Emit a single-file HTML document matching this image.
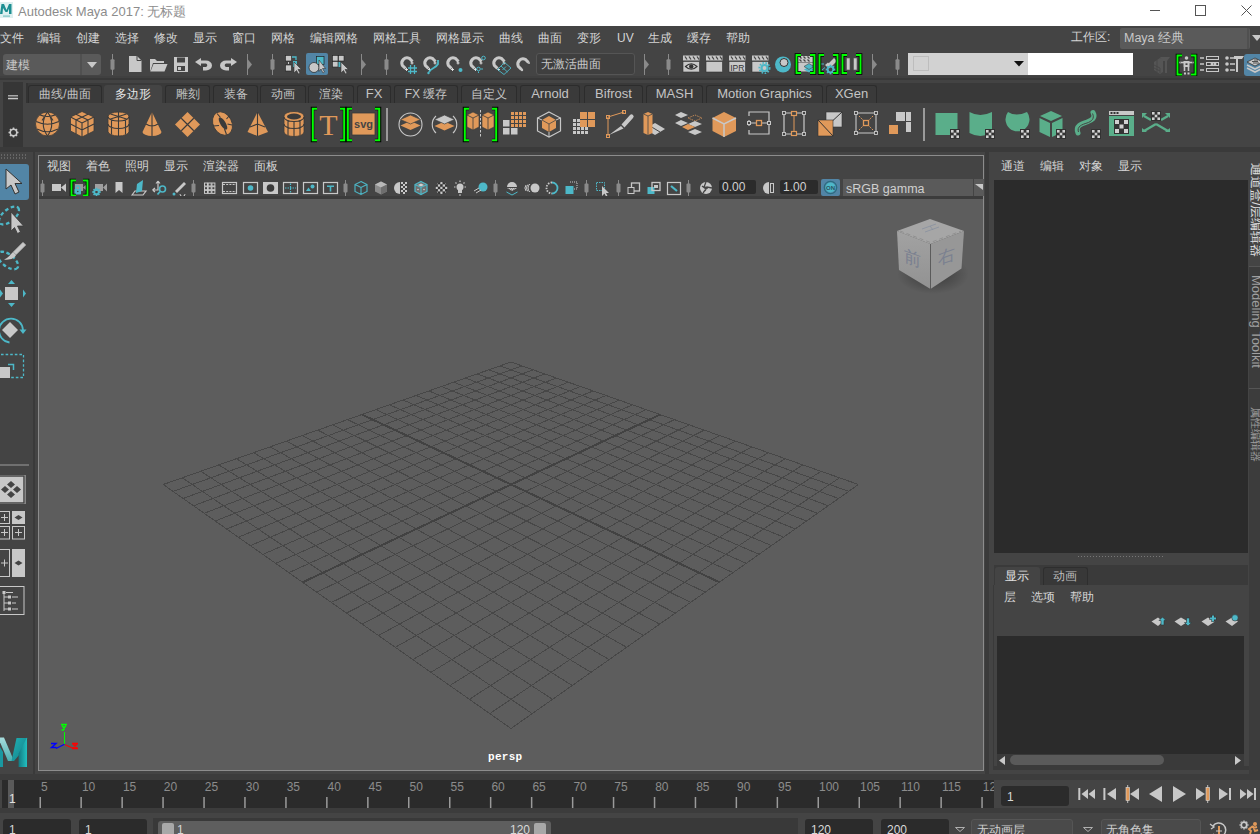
<!DOCTYPE html>
<html><head><meta charset="utf-8">
<style>
*{margin:0;padding:0;box-sizing:border-box}
html,body{width:1260px;height:834px;overflow:hidden;background:#444;font-family:"Liberation Sans",sans-serif;font-size:12px;color:#c4c4c4}
.a{position:absolute}
.t{position:absolute;white-space:nowrap;line-height:14px}
svg{position:absolute;overflow:visible}
</style></head><body>
<div class="a" style="left:0px;top:0px;width:1260px;height:26px;background:#fff;"></div>
<div class="t" style="left:18px;top:5px;color:#8c8c8c;font-size:13px;">Autodesk Maya 2017: 无标题</div>
<svg style="left:0px;top:2px;" width="13" height="16" viewBox="0 0 13 16"><rect x="0" y="0" width="13" height="16" fill="#dff0f0"/><path d="M0 12L1.5 2H4L6.5 8L9 2H11.5V12H9V6.5L7.5 10H5.5L3 6L2.5 12Z" fill="#1d8f92"/><rect x="3" y="13.5" width="7" height="1.2" fill="#7cc4c4"/></svg>
<svg style="left:1150px;top:10px;" width="10" height="1" viewBox="0 0 10 1"><rect x="0" y="0" width="10" height="1" fill="#555"/></svg>
<svg style="left:1195px;top:5px;" width="11" height="11" viewBox="0 0 11 11"><rect x="0.5" y="0.5" width="10" height="10" fill="none" stroke="#555" stroke-width="1"/></svg>
<svg style="left:1241px;top:5px;" width="11" height="11" viewBox="0 0 11 11"><path d="M0.5 0.5L10.5 10.5M10.5 0.5L0.5 10.5" stroke="#555" stroke-width="1"/></svg>
<div class="t" style="left:0px;top:31px;color:#d4d4d4;font-size:12px;">文件</div>
<div class="t" style="left:37px;top:31px;color:#d4d4d4;font-size:12px;">编辑</div>
<div class="t" style="left:76px;top:31px;color:#d4d4d4;font-size:12px;">创建</div>
<div class="t" style="left:115px;top:31px;color:#d4d4d4;font-size:12px;">选择</div>
<div class="t" style="left:154px;top:31px;color:#d4d4d4;font-size:12px;">修改</div>
<div class="t" style="left:193px;top:31px;color:#d4d4d4;font-size:12px;">显示</div>
<div class="t" style="left:232px;top:31px;color:#d4d4d4;font-size:12px;">窗口</div>
<div class="t" style="left:271px;top:31px;color:#d4d4d4;font-size:12px;">网格</div>
<div class="t" style="left:310px;top:31px;color:#d4d4d4;font-size:12px;">编辑网格</div>
<div class="t" style="left:373px;top:31px;color:#d4d4d4;font-size:12px;">网格工具</div>
<div class="t" style="left:436px;top:31px;color:#d4d4d4;font-size:12px;">网格显示</div>
<div class="t" style="left:499px;top:31px;color:#d4d4d4;font-size:12px;">曲线</div>
<div class="t" style="left:538px;top:31px;color:#d4d4d4;font-size:12px;">曲面</div>
<div class="t" style="left:577px;top:31px;color:#d4d4d4;font-size:12px;">变形</div>
<div class="t" style="left:617px;top:31px;color:#d4d4d4;font-size:12px;">UV</div>
<div class="t" style="left:648px;top:31px;color:#d4d4d4;font-size:12px;">生成</div>
<div class="t" style="left:687px;top:31px;color:#d4d4d4;font-size:12px;">缓存</div>
<div class="t" style="left:726px;top:31px;color:#d4d4d4;font-size:12px;">帮助</div>
<div class="t" style="left:1071px;top:30px;color:#d4d4d4;font-size:12px;">工作区:</div>
<div class="a" style="left:1120px;top:28px;width:130px;height:21px;background:#5a5a5a;border-radius:2px"></div>
<div class="t" style="left:1124px;top:31px;color:#c8c8c8;font-size:12.5px;">Maya 经典</div>
<div class="a" style="left:1247px;top:28px;width:2px;height:21px;background:#505050;"></div>
<svg style="left:1252px;top:35px;" width="8" height="6" viewBox="0 0 8 6"><path d="M0 0H10L5 6Z" fill="#c8c8c8"/></svg>
<div class="a" style="left:3px;top:54px;width:98px;height:21px;background:#5a5a5a;border-radius:3px"></div>
<div class="a" style="left:80px;top:54px;width:2px;height:21px;background:#505050;"></div>
<svg style="left:87px;top:62px;" width="10" height="6" viewBox="0 0 10 6"><path d="M0 0H10L5 6Z" fill="#c8c8c8"/></svg>
<div class="t" style="left:6px;top:58px;color:#c8c8c8;font-size:12px;">建模</div>
<svg style="left:110px;top:54px;" width="5" height="21" viewBox="0 0 5 21"><rect x="2" y="0" width="1" height="21" fill="#8a8a8a"/><rect x="0.5" y="5.2" width="4" height="10.5" rx="1" fill="#8a8a8a"/></svg>
<svg style="left:129px;top:56px;" width="13" height="16" viewBox="0 0 13 16"><path d="M0 0H8L12.5 4.5V16H0Z" fill="#c8c8c8"/><path d="M8 0V4.5H12.5" fill="none" stroke="#444" stroke-width="1"/></svg>
<svg style="left:149px;top:57px;" width="19" height="15" viewBox="0 0 19 15"><path d="M1 2H6L8 4H15V6H4L1 15Z" fill="#c8c8c8"/><path d="M4.5 7H18.5L15.5 14.5H1.5Z" fill="#c8c8c8"/></svg>
<svg style="left:174px;top:57px;" width="14" height="15" viewBox="0 0 14 15"><path d="M0 0H14V15H0Z" fill="#c8c8c8"/><rect x="3" y="0.5" width="8" height="5" fill="#444"/><rect x="3" y="9" width="8" height="5" fill="#444"/><rect x="4" y="10" width="3" height="3" fill="#c8c8c8"/></svg>
<svg style="left:195px;top:58px;" width="18" height="12" viewBox="0 0 18 12"><path d="M0 4L6 0V2.5H11A6 5 0 0 1 11 12.5H8V9H11A2.5 2 0 0 0 11 5.5H6V8Z" fill="#c8c8c8"/></svg>
<svg style="left:219px;top:58px;" width="18" height="12" viewBox="0 0 18 12"><g transform="translate(18,0) scale(-1,1)"><path d="M0 4L6 0V2.5H11A6 5 0 0 1 11 12.5H8V9H11A2.5 2 0 0 0 11 5.5H6V8Z" fill="#c8c8c8"/></g></svg>
<svg style="left:247px;top:54px;" width="6" height="21" viewBox="0 0 6 21"><rect x="0" y="0" width="1" height="21" fill="#8a8a8a"/><path d="M1 5.5 L5 10.5 L1 15.5Z" fill="#8a8a8a"/></svg>
<svg style="left:270px;top:54px;" width="5" height="21" viewBox="0 0 5 21"><rect x="2" y="0" width="1" height="21" fill="#8a8a8a"/><rect x="0.5" y="5.2" width="4" height="10.5" rx="1" fill="#8a8a8a"/></svg>
<svg style="left:285px;top:55px;" width="18" height="19" viewBox="0 0 18 19"><rect x="0.5" y="0.5" width="6" height="5.5" fill="#c8c8c8" stroke="#222" stroke-width="0.6"/><rect x="0.5" y="10" width="6" height="6" fill="#c8c8c8" stroke="#222" stroke-width="0.6"/><rect x="3" y="7" width="1" height="2" fill="#c8c8c8"/><path d="M7 2H11V5" stroke="#4db8c8" stroke-width="1.3" fill="none"/><rect x="8" y="6" width="4" height="6" fill="#4db8c8"/><path d="M9 7V18L11.5 15.5L13.5 19L15 18L13 14.5H16.5Z" fill="#c8c8c8" stroke="#333" stroke-width="0.6"/></svg>
<div class="a" style="left:306px;top:53px;width:22px;height:22px;background:#5285a6;border-radius:2px"></div>
<svg style="left:308px;top:55px;" width="18" height="19" viewBox="0 0 18 19"><rect x="8.5" y="1.5" width="7.5" height="8" fill="#4db8c8" stroke="#222" stroke-width="0.7"/><circle cx="6" cy="12.5" r="5" fill="#c8c8c8" stroke="#222" stroke-width="0.7"/><path d="M11 5V16.5L13 14L15 18L16.5 17L14.5 13.5H17.5Z" fill="#c8c8c8" stroke="#333" stroke-width="0.6"/></svg>
<svg style="left:332px;top:55px;" width="18" height="19" viewBox="0 0 18 19"><rect x="0.5" y="0.5" width="5.5" height="5.5" fill="#c8c8c8" stroke="#222" stroke-width="0.6"/><rect x="6.5" y="0.5" width="5.5" height="5.5" fill="#c8c8c8" stroke="#222" stroke-width="0.6"/><rect x="0.5" y="6.5" width="5.5" height="5.5" fill="#c8c8c8" stroke="#222" stroke-width="0.6"/><rect x="6.5" y="7" width="2" height="5" fill="#4db8c8"/><path d="M9 7V18L11.5 15.5L13.5 19L15 18L13 14.5H16.5Z" fill="#c8c8c8" stroke="#333" stroke-width="0.6"/></svg>
<svg style="left:361px;top:54px;" width="6" height="21" viewBox="0 0 6 21"><rect x="0" y="0" width="1" height="21" fill="#8a8a8a"/><path d="M1 5.5 L5 10.5 L1 15.5Z" fill="#8a8a8a"/></svg>
<svg style="left:384px;top:54px;" width="5" height="21" viewBox="0 0 5 21"><rect x="2" y="0" width="1" height="21" fill="#8a8a8a"/><rect x="0.5" y="5.2" width="4" height="10.5" rx="1" fill="#8a8a8a"/></svg>
<svg style="left:400px;top:56px;" width="19" height="18" viewBox="0 0 19 18"><path d="M5.5 12.5L2.3 9.3A5.3 5.3 0 0 1 9.3 2.3L12.5 5.5" stroke="#c8c8c8" stroke-width="3" fill="none"/><path d="M6.5 12v3M5 13.5h3M12 5.5v3M10.5 7h3" stroke="#e8e8e8" stroke-width="0.9"/><path d="M10.5 9V18M14.5 9V18M8 12H17M8 15.5H17" stroke="#4db8c8" stroke-width="1.3"/></svg>
<svg style="left:423px;top:56px;" width="19" height="18" viewBox="0 0 19 18"><path d="M5.5 12.5L2.3 9.3A5.3 5.3 0 0 1 9.3 2.3L12.5 5.5" stroke="#c8c8c8" stroke-width="3" fill="none"/><path d="M6.5 12v3M5 13.5h3M12 5.5v3M10.5 7h3" stroke="#e8e8e8" stroke-width="0.9"/><path d="M6 16C8 12 13 12 15 8V4" stroke="#4db8c8" stroke-width="1.8" fill="none"/><circle cx="5.5" cy="17" r="1.2" fill="#4db8c8"/></svg>
<svg style="left:446px;top:56px;" width="19" height="18" viewBox="0 0 19 18"><path d="M5.5 12.5L2.3 9.3A5.3 5.3 0 0 1 9.3 2.3L12.5 5.5" stroke="#c8c8c8" stroke-width="3" fill="none"/><path d="M6.5 12v3M5 13.5h3M12 5.5v3M10.5 7h3" stroke="#e8e8e8" stroke-width="0.9"/><circle cx="14.5" cy="14" r="2" fill="#4db8c8"/></svg>
<svg style="left:469px;top:56px;" width="19" height="18" viewBox="0 0 19 18"><path d="M5.5 12.5L2.3 9.3A5.3 5.3 0 0 1 9.3 2.3L12.5 5.5" stroke="#c8c8c8" stroke-width="3" fill="none"/><path d="M6.5 12v3M5 13.5h3M12 5.5v3M10.5 7h3" stroke="#e8e8e8" stroke-width="0.9"/><circle cx="9.5" cy="13" r="1.8" stroke="#4db8c8" stroke-width="1" fill="none"/><circle cx="14.5" cy="2" r="1.8" stroke="#4db8c8" stroke-width="1" fill="none"/><path d="M12 13H14M9.5 15.5V17" stroke="#4db8c8" stroke-width="1"/></svg>
<svg style="left:492px;top:56px;" width="19" height="18" viewBox="0 0 19 18"><path d="M5.5 12.5L2.3 9.3A5.3 5.3 0 0 1 9.3 2.3L12.5 5.5" stroke="#c8c8c8" stroke-width="3" fill="none"/><path d="M6.5 12v3M5 13.5h3M12 5.5v3M10.5 7h3" stroke="#e8e8e8" stroke-width="0.9"/><path d="M5.5 13.5L12.5 6.5L19 12L12 18.5Z M9 10L15.5 16M10.5 14L14 10.5" stroke="#4db8c8" stroke-width="0.9" fill="none"/></svg>
<svg style="left:516px;top:56px;" width="16" height="18" viewBox="0 0 16 18"><path d="M5.5 13.5L2.3 10.3A5.3 5.3 0 0 1 9.3 3.3L12.5 6.5" stroke="#c8c8c8" stroke-width="3" fill="none"/><circle cx="13" cy="7" r="1" fill="#c8c8c8"/><circle cx="6" cy="14" r="1.2" fill="#c8c8c8"/></svg>
<div class="a" style="left:536px;top:53px;width:99px;height:22px;background:#3f3f3f;border:1px solid #555;border-radius:3px"></div>
<div class="t" style="left:541px;top:57px;color:#c8c8c8;font-size:12px;">无激活曲面</div>
<svg style="left:644px;top:54px;" width="6" height="21" viewBox="0 0 6 21"><rect x="0" y="0" width="1" height="21" fill="#8a8a8a"/><path d="M1 5.5 L5 10.5 L1 15.5Z" fill="#8a8a8a"/></svg>
<svg style="left:666px;top:54px;" width="5" height="21" viewBox="0 0 5 21"><rect x="2" y="0" width="1" height="21" fill="#8a8a8a"/><rect x="0.5" y="5.2" width="4" height="10.5" rx="1" fill="#8a8a8a"/></svg>
<svg style="left:683px;top:55px;" width="18" height="18" viewBox="0 0 18 18"><rect x="0" y="0.5" width="16.5" height="5" fill="#c8c8c8"/><path d="M2 1.5l2 3M6 1.5l2 3M10 1.5l2 3M14 1.5l2 3" stroke="#444" stroke-width="1.3"/><rect x="0" y="6.5" width="16.5" height="10.5" fill="#c8c8c8" stroke="#333" stroke-width="0.6"/><path d="M2.5 11.5Q8.25 6 14 11.5Q8.25 17 2.5 11.5Z" fill="none" stroke="#333" stroke-width="1.1"/><circle cx="8.25" cy="11.5" r="2.2" fill="#333"/></svg>
<svg style="left:706px;top:55px;" width="18" height="18" viewBox="0 0 18 18"><rect x="0" y="0.5" width="16.5" height="5" fill="#c8c8c8"/><path d="M2 1.5l2 3M6 1.5l2 3M10 1.5l2 3M14 1.5l2 3" stroke="#444" stroke-width="1.3"/><rect x="0" y="6.5" width="16.5" height="10.5" fill="#c8c8c8" stroke="#333" stroke-width="0.6"/></svg>
<svg style="left:729px;top:55px;" width="18" height="18" viewBox="0 0 18 18"><rect x="0" y="0.5" width="16.5" height="5" fill="#c8c8c8"/><path d="M2 1.5l2 3M6 1.5l2 3M10 1.5l2 3M14 1.5l2 3" stroke="#444" stroke-width="1.3"/><rect x="0" y="6.5" width="16.5" height="10.5" fill="#c8c8c8" stroke="#333" stroke-width="0.6"/><text x="8.25" y="15.5" text-anchor="middle" font-family="Liberation Sans" font-size="8.5" fill="#333">IPR</text></svg>
<svg style="left:752px;top:55px;" width="18" height="18" viewBox="0 0 18 18"><rect x="0" y="0.5" width="16.5" height="5" fill="#c8c8c8"/><path d="M2 1.5l2 3M6 1.5l2 3M10 1.5l2 3M14 1.5l2 3" stroke="#444" stroke-width="1.3"/><rect x="0" y="6.5" width="16.5" height="10.5" fill="#c8c8c8" stroke="#333" stroke-width="0.6"/><circle cx="12.5" cy="13" r="3" fill="#c8c8c8" stroke="#4db8c8" stroke-width="2.2"/><circle cx="12.5" cy="13" r="5.2" fill="none" stroke="#4db8c8" stroke-width="1.6" stroke-dasharray="1.7 1.4"/></svg>
<svg style="left:774px;top:55px;" width="18" height="18" viewBox="0 0 18 18"><circle cx="9" cy="9.5" r="8" fill="#4db8c8"/><circle cx="10" cy="7.5" r="4" fill="#c8c8c8" stroke="#333" stroke-width="1"/></svg>
<svg style="left:795px;top:53px;" width="21" height="22" viewBox="0 0 21 22"><rect x="3" y="3" width="15" height="6" fill="#c8c8c8"/><path d="M4.5 3.5l2 2M8.5 3.5l2 2M12.5 3.5l2 2M4.5 6.5l2 2M8.5 6.5l2 2M12.5 6.5l2 2" stroke="#444" stroke-width="1.2"/><rect x="3" y="9.5" width="15" height="9" fill="#c8c8c8"/><path d="M9 16.5L14 13.5L19 16.5L14 19.5Z" fill="#4db8c8"/><path d="M9 13.5L14 10.5L19 13.5L14 16.5Z" fill="#4db8c8" stroke="#444" stroke-width="0.6"/><path d="M6 2.0H1.5V20.0H6M15 2.0H19.5V20.0H15" stroke="#000" stroke-width="3.6" fill="none"/><path d="M6 2.0H1.5V20.0H6M15 2.0H19.5V20.0H15" stroke="#00ff00" stroke-width="1.9" fill="none"/></svg>
<svg style="left:818px;top:53px;" width="21" height="22" viewBox="0 0 21 22"><path d="M10 11L16 5L19 8L13 14Z" fill="#c8c8c8"/><path d="M7 12L10 9.5L13.5 13L11 15.5Z" fill="#c8c8c8"/><path d="M3 11H6M4 17L7 14.5" stroke="#4db8c8" stroke-width="1"/><circle cx="12.5" cy="16.5" r="2.8" fill="none" stroke="#4db8c8" stroke-width="1.8"/><rect x="11.6" y="11.7" width="1.8" height="2" fill="#4db8c8" transform="rotate(0 12.5 16.5)"/><rect x="11.6" y="11.7" width="1.8" height="2" fill="#4db8c8" transform="rotate(45 12.5 16.5)"/><rect x="11.6" y="11.7" width="1.8" height="2" fill="#4db8c8" transform="rotate(90 12.5 16.5)"/><rect x="11.6" y="11.7" width="1.8" height="2" fill="#4db8c8" transform="rotate(135 12.5 16.5)"/><rect x="11.6" y="11.7" width="1.8" height="2" fill="#4db8c8" transform="rotate(180 12.5 16.5)"/><rect x="11.6" y="11.7" width="1.8" height="2" fill="#4db8c8" transform="rotate(225 12.5 16.5)"/><rect x="11.6" y="11.7" width="1.8" height="2" fill="#4db8c8" transform="rotate(270 12.5 16.5)"/><rect x="11.6" y="11.7" width="1.8" height="2" fill="#4db8c8" transform="rotate(315 12.5 16.5)"/><path d="M6 2.0H1.5V20.0H6M15 2.0H19.5V20.0H15" stroke="#000" stroke-width="3.6" fill="none"/><path d="M6 2.0H1.5V20.0H6M15 2.0H19.5V20.0H15" stroke="#00ff00" stroke-width="1.9" fill="none"/></svg>
<svg style="left:841px;top:53px;" width="21" height="22" viewBox="0 0 21 22"><rect x="5.5" y="5" width="3.5" height="12" fill="#c8c8c8" stroke="#555" stroke-width="0.6"/><rect x="12.5" y="5" width="3.5" height="12" fill="#c8c8c8" stroke="#555" stroke-width="0.6"/><path d="M6 2.0H1.5V20.0H6M15 2.0H19.5V20.0H15" stroke="#000" stroke-width="3.6" fill="none"/><path d="M6 2.0H1.5V20.0H6M15 2.0H19.5V20.0H15" stroke="#00ff00" stroke-width="1.9" fill="none"/></svg>
<svg style="left:872px;top:54px;" width="6" height="21" viewBox="0 0 6 21"><rect x="0" y="0" width="1" height="21" fill="#8a8a8a"/><path d="M1 5.5 L5 10.5 L1 15.5Z" fill="#8a8a8a"/></svg>
<svg style="left:895px;top:54px;" width="5" height="21" viewBox="0 0 5 21"><rect x="2" y="0" width="1" height="21" fill="#8a8a8a"/><rect x="0.5" y="5.2" width="4" height="10.5" rx="1" fill="#8a8a8a"/></svg>
<div class="a" style="left:908px;top:53px;width:120px;height:22px;background:#d2d2d2;"></div>
<div class="a" style="left:913px;top:56px;width:16px;height:15px;background:transparent;border:1px solid #bdbdbd"></div>
<svg style="left:1014px;top:61px;" width="10" height="6" viewBox="0 0 10 6"><path d="M0 0H10L5 5.5Z" fill="#111"/></svg>
<div class="a" style="left:1028px;top:53px;width:105px;height:22px;background:#ffffff;"></div>
<svg style="left:1153px;top:56px;" width="18" height="18" viewBox="0 0 18 18"><path d="M1 6L7 2L10 3V16L7 18L1 14Z" fill="#555"/><path d="M7 1H17L14 5H10Z" fill="#555"/><rect x="12" y="4" width="2" height="13" fill="#555"/><path d="M1 9L7 12V17M1 12L7 15M4 4V16" stroke="#444" stroke-width="0.8" fill="none"/></svg>
<svg style="left:1176px;top:54px;" width="21" height="22" viewBox="0 0 21 22"><circle cx="10.5" cy="4" r="1.8" fill="#c8c8c8"/><rect x="7.5" y="7" width="6" height="6" fill="#c8c8c8"/><rect x="9.5" y="9" width="2" height="2" fill="#444"/><path d="M3 8.5H18" stroke="#c8c8c8" stroke-width="1.6"/><rect x="2.5" y="7.5" width="2" height="2" fill="#c8c8c8" stroke="#444" stroke-width="0.5"/><rect x="16.5" y="7.5" width="2" height="2" fill="#c8c8c8" stroke="#444" stroke-width="0.5"/><path d="M8.5 13V17M12.5 13V17" stroke="#c8c8c8" stroke-width="1.6"/><rect x="8" y="18.5" width="2" height="2" fill="#c8c8c8"/><rect x="11.5" y="18.5" width="2" height="2" fill="#c8c8c8"/><path d="M6 1.5H1.5V20.5H6M15 1.5H19.5V20.5H15" stroke="#000" stroke-width="3.6" fill="none"/><path d="M6 1.5H1.5V20.5H6M15 1.5H19.5V20.5H15" stroke="#00ff00" stroke-width="1.9" fill="none"/></svg>
<svg style="left:1200px;top:56px;" width="20" height="17" viewBox="0 0 20 17"><path d="M0 2H4M0 8H4M0 14H4" stroke="#c8c8c8" stroke-width="1.5"/><rect x="6.5" y="0.5" width="12" height="3" fill="none" stroke="#c8c8c8" stroke-width="1"/><rect x="6.5" y="12.5" width="12" height="3" fill="none" stroke="#c8c8c8" stroke-width="1"/><rect x="6.5" y="6.5" width="12" height="3" fill="none" stroke="#c8c8c8" stroke-width="1"/><circle cx="12" cy="8" r="1.5" fill="#c8c8c8"/><circle cx="15" cy="8" r="1.5" fill="#c8c8c8"/></svg>
<svg style="left:1225px;top:56px;" width="20" height="17" viewBox="0 0 20 17"><circle cx="2" cy="2" r="1.8" fill="#c8c8c8"/><circle cx="2" cy="8" r="1.8" fill="#c8c8c8"/><circle cx="2" cy="14" r="1.8" fill="#c8c8c8"/><path d="M5 2H10M5 8H10M5 14H10" stroke="#c8c8c8" stroke-width="1.4"/><path d="M9 0H19L17 3H13V16H11V3H9Z" fill="#c8c8c8"/></svg>
<div class="a" style="left:1244px;top:54px;width:16px;height:22px;background:#5285a6;border-radius:3px 0 0 3px"></div>
<svg style="left:1247px;top:57px;" width="13" height="17" viewBox="0 0 13 17"><path d="M0 11L8 15L16 11M0 8L8 12L16 8" stroke="#c8c8c8" stroke-width="1.6" fill="none"/><path d="M0 5L8 1L16 5L8 9Z" fill="#c8c8c8" stroke="#333" stroke-width="0.8"/><path d="M5 4.5H11M6 6H12M7 3H11" stroke="#333" stroke-width="0.8"/></svg>
<div class="a" style="left:0px;top:76px;width:1260px;height:2px;background:#404040;"></div>
<div class="a" style="left:0px;top:78px;width:1260px;height:2px;background:#383838;"></div>
<div class="a" style="left:0px;top:80px;width:1260px;height:3px;background:#434343;"></div>
<div class="a" style="left:26px;top:83px;width:1234px;height:20px;background:#393939;"></div>
<div class="a" style="left:26px;top:83px;width:2px;height:20px;background:#333;"></div>
<div class="a" style="left:3px;top:82px;width:20px;height:65px;background:#363636;"></div>
<svg style="left:8px;top:95px;" width="10" height="5" viewBox="0 0 10 5"><rect x="0" y="0" width="10" height="1.5" fill="#a8a8a8"/><rect x="0" y="2.8" width="10" height="1.5" fill="#c8c8c8"/></svg>
<svg style="left:7px;top:126px;" width="13" height="13" viewBox="0 0 13 13"><circle cx="6.5" cy="6.5" r="3.3" fill="none" stroke="#c8c8c8" stroke-width="1.6"/><path d="M6.5 1.5V3M6.5 10V11.5M1.5 6.5H3M10 6.5H11.5M3 3L4 4M9 9L10 10M3 10L4 9M9 4L10 3" stroke="#c8c8c8" stroke-width="1.6"/></svg>
<div class="a" style="left:28px;top:85px;width:74px;height:18px;background:#3a3a3a;border-radius:3px 3px 0 0;border:1px solid #2c2c2c;border-bottom:none"></div>
<div class="t" style="left:28px;top:87px;width:74px;text-align:center;color:#c4c4c4;font-size:12px">曲线/曲面</div>
<div class="a" style="left:104px;top:85px;width:58px;height:18px;background:#444;border-radius:3px 3px 0 0;"></div>
<div class="t" style="left:104px;top:87px;width:58px;text-align:center;color:#e8e8e8;font-size:12px">多边形</div>
<div class="a" style="left:165px;top:85px;width:45px;height:18px;background:#3a3a3a;border-radius:3px 3px 0 0;border:1px solid #2c2c2c;border-bottom:none"></div>
<div class="t" style="left:165px;top:87px;width:45px;text-align:center;color:#c4c4c4;font-size:12px">雕刻</div>
<div class="a" style="left:213px;top:85px;width:45px;height:18px;background:#3a3a3a;border-radius:3px 3px 0 0;border:1px solid #2c2c2c;border-bottom:none"></div>
<div class="t" style="left:213px;top:87px;width:45px;text-align:center;color:#c4c4c4;font-size:12px">装备</div>
<div class="a" style="left:260px;top:85px;width:46px;height:18px;background:#3a3a3a;border-radius:3px 3px 0 0;border:1px solid #2c2c2c;border-bottom:none"></div>
<div class="t" style="left:260px;top:87px;width:46px;text-align:center;color:#c4c4c4;font-size:12px">动画</div>
<div class="a" style="left:308px;top:85px;width:46px;height:18px;background:#3a3a3a;border-radius:3px 3px 0 0;border:1px solid #2c2c2c;border-bottom:none"></div>
<div class="t" style="left:308px;top:87px;width:46px;text-align:center;color:#c4c4c4;font-size:12px">渲染</div>
<div class="a" style="left:357px;top:85px;width:34px;height:18px;background:#3a3a3a;border-radius:3px 3px 0 0;border:1px solid #2c2c2c;border-bottom:none"></div>
<div class="t" style="left:357px;top:86.5px;width:34px;text-align:center;color:#c4c4c4;font-size:13px">FX</div>
<div class="a" style="left:394px;top:85px;width:64px;height:18px;background:#3a3a3a;border-radius:3px 3px 0 0;border:1px solid #2c2c2c;border-bottom:none"></div>
<div class="t" style="left:394px;top:87px;width:64px;text-align:center;color:#c4c4c4;font-size:12px">FX 缓存</div>
<div class="a" style="left:461px;top:85px;width:56px;height:18px;background:#3a3a3a;border-radius:3px 3px 0 0;border:1px solid #2c2c2c;border-bottom:none"></div>
<div class="t" style="left:461px;top:87px;width:56px;text-align:center;color:#c4c4c4;font-size:12px">自定义</div>
<div class="a" style="left:520px;top:85px;width:60px;height:18px;background:#3a3a3a;border-radius:3px 3px 0 0;border:1px solid #2c2c2c;border-bottom:none"></div>
<div class="t" style="left:520px;top:86.5px;width:60px;text-align:center;color:#c4c4c4;font-size:13px">Arnold</div>
<div class="a" style="left:584px;top:85px;width:59px;height:18px;background:#3a3a3a;border-radius:3px 3px 0 0;border:1px solid #2c2c2c;border-bottom:none"></div>
<div class="t" style="left:584px;top:86.5px;width:59px;text-align:center;color:#c4c4c4;font-size:13px">Bifrost</div>
<div class="a" style="left:646px;top:85px;width:57px;height:18px;background:#3a3a3a;border-radius:3px 3px 0 0;border:1px solid #2c2c2c;border-bottom:none"></div>
<div class="t" style="left:646px;top:86.5px;width:57px;text-align:center;color:#c4c4c4;font-size:13px">MASH</div>
<div class="a" style="left:706px;top:85px;width:117px;height:18px;background:#3a3a3a;border-radius:3px 3px 0 0;border:1px solid #2c2c2c;border-bottom:none"></div>
<div class="t" style="left:706px;top:86.5px;width:117px;text-align:center;color:#c4c4c4;font-size:13px">Motion Graphics</div>
<div class="a" style="left:826px;top:85px;width:51px;height:18px;background:#3a3a3a;border-radius:3px 3px 0 0;border:1px solid #2c2c2c;border-bottom:none"></div>
<div class="t" style="left:826px;top:86.5px;width:51px;text-align:center;color:#c4c4c4;font-size:13px">XGen</div>
<svg style="left:35px;top:111px;" width="26" height="26" viewBox="0 0 26 26"><circle cx="12.5" cy="13" r="12" fill="#e0995a" stroke="#3a3a3a" stroke-width="0.8"/><path d="M1.2 10.5Q12.5 16 23.8 10.5M2 18Q12.5 23.5 23 18M5 4Q12.5 7 20 4M12.5 1Q4 13 12.5 25M12.5 1Q21 13 12.5 25M12.5 1L7 9.5M12.5 1L18 9.5" stroke="#3a3a3a" stroke-width="1.1" fill="none"/></svg>
<svg style="left:70px;top:111px;" width="26" height="26" viewBox="0 0 26 26"><path d="M12 0.5L24 6V20L12 26L0.5 20V6Z" fill="#e0995a" stroke="#3a3a3a" stroke-width="0.8"/><path d="M0.5 6L12 12L24 6M12 12V26M6 3.2L18 9M18 3.2L6 9M0.5 13L12 19L24 13M6 9V23M18 9V23" stroke="#3a3a3a" stroke-width="1.1" fill="none"/></svg>
<svg style="left:107px;top:111px;" width="23" height="26" viewBox="0 0 23 26"><path d="M1 5.5A10.5 4.5 0 0 1 22 5.5V20.5A10.5 4.5 0 0 1 1 20.5Z" fill="#e0995a" stroke="#3a3a3a" stroke-width="0.8"/><path d="M1 5.5A10.5 4.5 0 0 0 22 5.5M1 13A10.5 4.5 0 0 0 22 13M11.5 10V25M4.5 9V23.5M18.5 9V23.5M11.5 1V10M3.5 3L19.5 8M19.5 3L3.5 8" stroke="#3a3a3a" stroke-width="1.1" fill="none"/></svg>
<svg style="left:142px;top:111px;" width="21" height="26" viewBox="0 0 21 26"><path d="M10 1L0.5 21A9.5 4 0 0 0 19.5 21Z" fill="#e0995a"/><path d="M10 1V25M4 13Q10 17 16 13" stroke="#3a3a3a" stroke-width="1.1" fill="none"/></svg>
<svg style="left:175px;top:111px;" width="26" height="26" viewBox="0 0 26 26"><path d="M12.5 1L25 13.5L12.5 26L0 13.5Z" fill="#e0995a"/><path d="M6.25 7.25L18.75 19.75M18.75 7.25L6.25 19.75" stroke="#3a3a3a" stroke-width="1.2"/></svg>
<svg style="left:212px;top:111px;" width="22" height="26" viewBox="0 0 22 26"><ellipse cx="10.5" cy="12.5" rx="9.3" ry="12.3" transform="rotate(-28 10.5 12.5)" fill="#e0995a" stroke="#3a3a3a" stroke-width="0.8"/><ellipse cx="11" cy="12.5" rx="2.6" ry="7" transform="rotate(-32 11 12.5)" fill="#3a3a3a"/><path d="M5 2.5L8.5 6.5M17.5 4.5L14.5 8M1.5 15L7 14.5M12.5 18L14.5 23.5M20 14L15.5 13" stroke="#3a3a3a" stroke-width="1.1" fill="none"/></svg>
<svg style="left:247px;top:111px;" width="22" height="26" viewBox="0 0 22 26"><path d="M10.5 1L21 21L10.5 25L0.5 21Z" fill="#e0995a"/><path d="M10.5 1V25M3 16L10.5 13L18 16" stroke="#3a3a3a" stroke-width="1.1" fill="none"/></svg>
<svg style="left:283px;top:111px;" width="22" height="26" viewBox="0 0 22 26"><path d="M1 5A10 4.5 0 0 1 21 5V21A10 4.5 0 0 1 1 21Z" fill="#e0995a" stroke="#3a3a3a" stroke-width="0.8"/><ellipse cx="11" cy="5.5" rx="7" ry="3" fill="#3a3a3a"/><path d="M1 13A10 4.5 0 0 0 21 13M1 6A10 4.5 0 0 0 21 6M11 10V25.5M5 9V24M17 9V24" stroke="#3a3a3a" stroke-width="1.1" fill="none"/></svg>
<svg style="left:311px;top:107px;" width="35" height="35" viewBox="0 0 35 35"><text x="17.5" y="28" text-anchor="middle" font-family="Liberation Serif" font-size="30" fill="#e0995a">T</text><path d="M6 1.5H1.5V33.5H6M29 1.5H33.5V33.5H29" stroke="#000" stroke-width="3.5" fill="none"/><path d="M6 1.8H1.8V33.2H6M29 1.8H33.2V33.2H29" stroke="#00ff00" stroke-width="2" fill="none"/></svg>
<svg style="left:346px;top:107px;" width="35" height="35" viewBox="0 0 35 35"><rect x="6" y="6" width="23" height="22" fill="#e0995a" stroke="#3a3a3a" stroke-width="0.8"/><text x="17.5" y="21" text-anchor="middle" font-family="Liberation Sans" font-weight="bold" font-size="11" fill="#444">svg</text><path d="M6 1.5H1.5V33.5H6M29 1.5H33.5V33.5H29" stroke="#000" stroke-width="3.5" fill="none"/><path d="M6 1.8H1.8V33.2H6M29 1.8H33.2V33.2H29" stroke="#00ff00" stroke-width="2" fill="none"/></svg>
<div class="a" style="left:386px;top:108px;width:2px;height:33px;background:#9a9a9a;"></div>
<svg style="left:398px;top:111px;" width="26" height="26" viewBox="0 0 26 26"><circle cx="12.5" cy="13.5" r="11.5" fill="none" stroke="#c8c8c8" stroke-width="1.1"/><path d="M2.5 14.5L12.5 10L22.5 14.5L12.5 19Z" fill="#e0995a"/><path d="M2.5 8.5L12.5 4L22.5 8.5L12.5 13Z" fill="#e0995a" stroke="#444" stroke-width="0.7"/></svg>
<svg style="left:432px;top:111px;" width="26" height="26" viewBox="0 0 26 26"><path d="M4 5A11.5 11.5 0 0 0 4 22M21 5A11.5 11.5 0 0 1 21 22" stroke="#c8c8c8" stroke-width="1.1" fill="none"/><path d="M2.5 15L12.5 10.5L22.5 15L12.5 19.5Z" fill="#e0995a"/><path d="M2.5 8.5L12.5 4L22.5 8.5L12.5 13Z" fill="#c8c8c8" stroke="#444" stroke-width="0.7"/></svg>
<svg style="left:463px;top:107px;" width="35" height="35" viewBox="0 0 35 35"><path d="M4 8L10 5L16 8V20L10 23L4 20Z" fill="#e0995a" stroke="#3a3a3a" stroke-width="0.6"/><path d="M4 8L10 11L16 8M10 11V23" stroke="#3a3a3a" stroke-width="0.8" fill="none"/><path d="M19 8L25 5L31 8V20L25 23L19 20Z" fill="#e0995a" stroke="#3a3a3a" stroke-width="0.6"/><path d="M19 8L25 11L31 8M25 11V23" stroke="#3a3a3a" stroke-width="0.8" fill="none"/><path d="M17.5 3V31" stroke="#c8c8c8" stroke-width="1" stroke-dasharray="2.5 1.5"/><path d="M6 1.5H1.5V33.5H6M29 1.5H33.5V33.5H29" stroke="#000" stroke-width="3.5" fill="none"/><path d="M6 1.8H1.8V33.2H6M29 1.8H33.2V33.2H29" stroke="#00ff00" stroke-width="2" fill="none"/></svg>
<svg style="left:502px;top:111px;" width="26" height="26" viewBox="0 0 26 26"><g fill="#e0995a"><rect x="9" y="1" width="3" height="3"/><rect x="9" y="5" width="3" height="3"/><rect x="9" y="9" width="3" height="3"/><rect x="9" y="13" width="3" height="3"/><rect x="13" y="1" width="3" height="3"/><rect x="13" y="5" width="3" height="3"/><rect x="13" y="9" width="3" height="3"/><rect x="13" y="13" width="3" height="3"/><rect x="17" y="1" width="3" height="3"/><rect x="17" y="5" width="3" height="3"/><rect x="17" y="9" width="3" height="3"/><rect x="17" y="13" width="3" height="3"/><rect x="21" y="1" width="3" height="3"/><rect x="21" y="5" width="3" height="3"/><rect x="21" y="9" width="3" height="3"/><rect x="21" y="13" width="3" height="3"/></g><g fill="#c8c8c8"><rect x="1" y="9" width="6.5" height="6.5"/><rect x="1" y="17" width="6.5" height="6.5"/><rect x="9" y="17" width="6.5" height="6.5"/></g></svg>
<svg style="left:537px;top:111px;" width="25" height="26" viewBox="0 0 25 26"><path d="M12 1L23.5 7V20L12 26L0.5 20V7Z" fill="none" stroke="#c8c8c8" stroke-width="1.2"/><path d="M12 5L19 9V17L12 21L5 17V9Z" fill="#e0995a"/><path d="M5 9L12 13L19 9M12 13V21" stroke="#444" stroke-width="0.8" fill="none"/><path d="M0.5 7L5 9M23.5 7L19 9M12 26V21" stroke="#c8c8c8" stroke-width="1"/></svg>
<svg style="left:572px;top:111px;" width="25" height="26" viewBox="0 0 25 26"><g fill="#c8c8c8"><rect x="1" y="8" width="3" height="3"/><rect x="1" y="12" width="3" height="3"/><rect x="5" y="8" width="3" height="3"/><rect x="5" y="12" width="3" height="3"/><rect x="1" y="16" width="3" height="3"/><rect x="1" y="20" width="3" height="3"/><rect x="5" y="16" width="3" height="3"/><rect x="5" y="20" width="3" height="3"/><rect x="9" y="16" width="3" height="3"/><rect x="9" y="20" width="3" height="3"/><rect x="13" y="16" width="3" height="3"/><rect x="13" y="20" width="3" height="3"/></g><rect x="8" y="1" width="15" height="15" fill="#e0995a"/><path d="M15.5 1V16M8 8.5H23" stroke="#444" stroke-width="1"/></svg>
<svg style="left:606px;top:111px;" width="28" height="26" viewBox="0 0 28 26"><path d="M2 25L2 6L18 1" stroke="#e0995a" stroke-width="1" fill="none"/><rect x="0.5" y="4.5" width="3" height="3" fill="none" stroke="#e0995a" stroke-width="1"/><rect x="16.5" y="-0.5" width="3" height="3" fill="none" stroke="#e0995a" stroke-width="1"/><rect x="0.5" y="23.5" width="3" height="3" fill="none" stroke="#e0995a" stroke-width="1"/><path d="M3 24L15 15L17.5 17.5Z" fill="#c8c8c8"/><path d="M15.5 13.5L24 4A2 2 0 0 1 27 7L18.5 16.5Z" fill="#c8c8c8"/></svg>
<svg style="left:643px;top:111px;" width="24" height="26" viewBox="0 0 24 26"><path d="M2 18L12 24L22 18L12 12Z" fill="#c8c8c8"/><path d="M7 15L17 21" stroke="#444" stroke-width="1"/><path d="M0.5 3L5 1L9.5 3V22L5 24L0.5 22Z" fill="#e0995a"/><path d="M0.5 3L5 5L9.5 3M5 5V24" stroke="#444" stroke-width="0.8" fill="none"/></svg>
<svg style="left:674px;top:111px;" width="31" height="26" viewBox="0 0 31 26"><path d="M1 4L7 1L14 4L7 7Z" fill="#c8c8c8"/><path d="M14 7L21 4L28 7L21 10Z" fill="none" stroke="#e0995a" stroke-width="0.8" stroke-dasharray="1.5 1"/><path d="M1 12L7 9L14 12L7 15Z M14 13L21 10L28 13L21 16Z M14 21L21 18L28 21L21 24Z" fill="#c8c8c8"/><path d="M8 16L14 13L21 16L14 19Z" fill="#e0995a"/></svg>
<svg style="left:712px;top:111px;" width="25" height="26" viewBox="0 0 25 26"><path d="M12 1L24 7V20L12 26L0.5 20V7Z" fill="#e0995a"/><path d="M0.5 7L12 13L24 7M12 13V26" stroke="#c8c8c8" stroke-width="1.5" fill="none"/></svg>
<svg style="left:747px;top:111px;" width="24" height="26" viewBox="0 0 24 26"><path d="M2 5V1H22V23H2V19M2 9V15" stroke="#c8c8c8" stroke-width="1.2" fill="none"/><path d="M2 12H22" stroke="#c8c8c8" stroke-width="1"/><rect x="0.5" y="10.5" width="3" height="3" fill="#444" stroke="#c8c8c8" stroke-width="1"/><rect x="20.5" y="10.5" width="3" height="3" fill="#444" stroke="#c8c8c8" stroke-width="1"/><rect x="9.5" y="9.5" width="5" height="5" fill="#444" stroke="#e0995a" stroke-width="1.3"/></svg>
<svg style="left:782px;top:111px;" width="25" height="26" viewBox="0 0 25 26"><path d="M2 1V24M22 1V24M2 2H22M2 23H22" stroke="#c8c8c8" stroke-width="1.2" fill="none"/><path d="M12 2V23" stroke="#e0995a" stroke-width="1"/><rect x="0.5" y="0.5" width="3" height="3" fill="#444" stroke="#c8c8c8" stroke-width="0.9"/><rect x="20.5" y="0.5" width="3" height="3" fill="#444" stroke="#c8c8c8" stroke-width="0.9"/><rect x="0.5" y="21.5" width="3" height="3" fill="#444" stroke="#c8c8c8" stroke-width="0.9"/><rect x="20.5" y="21.5" width="3" height="3" fill="#444" stroke="#c8c8c8" stroke-width="0.9"/><rect x="9.5" y="0.5" width="5" height="4" fill="#444" stroke="#e0995a" stroke-width="1.2"/><rect x="9.5" y="20.5" width="5" height="4" fill="#444" stroke="#e0995a" stroke-width="1.2"/></svg>
<svg style="left:817px;top:111px;" width="26" height="26" viewBox="0 0 26 26"><rect x="9" y="1" width="16" height="15" fill="#c8c8c8" stroke="#333" stroke-width="0.6"/><path d="M9 16L25 1" stroke="#333" stroke-width="1"/><rect x="1" y="9" width="15" height="16" fill="#e0995a" stroke="#333" stroke-width="0.6"/><path d="M1 9L16 25" stroke="#333" stroke-width="1"/></svg>
<svg style="left:854px;top:111px;" width="24" height="26" viewBox="0 0 24 26"><path d="M2 1V23M22 1V23M2 2H22M2 22H22" stroke="#c8c8c8" stroke-width="1.1" fill="none"/><rect x="0.5" y="0.5" width="3" height="3" fill="#444" stroke="#c8c8c8" stroke-width="0.9"/><rect x="20.5" y="0.5" width="3" height="3" fill="#444" stroke="#c8c8c8" stroke-width="0.9"/><rect x="0.5" y="20.5" width="3" height="3" fill="#444" stroke="#c8c8c8" stroke-width="0.9"/><rect x="20.5" y="20.5" width="3" height="3" fill="#444" stroke="#c8c8c8" stroke-width="0.9"/><path d="M5 5L9 9M19 5L15 9M5 19L9 15M19 19L15 15" stroke="#e0995a" stroke-width="1" stroke-dasharray="1.5 1"/><rect x="9.5" y="9.5" width="5" height="5" fill="#444" stroke="#e0995a" stroke-width="1.3"/></svg>
<svg style="left:888px;top:111px;" width="23" height="26" viewBox="0 0 23 26"><rect x="8" y="1" width="9" height="9" fill="#c8c8c8"/><rect x="18" y="1" width="5" height="9" fill="#c8c8c8"/><rect x="18" y="11" width="5" height="10" fill="#c8c8c8"/><rect x="1" y="14" width="9" height="9" fill="#e0995a"/></svg>
<div class="a" style="left:923px;top:108px;width:2px;height:33px;background:#9a9a9a;"></div>
<svg style="left:935px;top:111px;" width="27" height="26" viewBox="0 0 27 26"><rect x="0.5" y="2" width="22" height="22" fill="#5aae8a"/><rect x="15" y="18" width="10" height="10" fill="#333"/><g fill="#d0d0d0"><rect x="16" y="19" width="2.6" height="2.6"/><rect x="21.4" y="19" width="2.6" height="2.6"/><rect x="18.7" y="21.7" width="2.6" height="2.6"/><rect x="16" y="24.4" width="2.6" height="2.6"/><rect x="21.4" y="24.4" width="2.6" height="2.6"/></g></svg>
<svg style="left:969px;top:111px;" width="28" height="26" viewBox="0 0 28 26"><path d="M0.5 1Q11 7 23 1V22Q11 28 0.5 22Z" fill="#5aae8a"/><rect x="16" y="18" width="10" height="10" fill="#333"/><g fill="#d0d0d0"><rect x="17" y="19" width="2.6" height="2.6"/><rect x="22.4" y="19" width="2.6" height="2.6"/><rect x="19.7" y="21.7" width="2.6" height="2.6"/><rect x="17" y="24.4" width="2.6" height="2.6"/><rect x="22.4" y="24.4" width="2.6" height="2.6"/></g></svg>
<svg style="left:1004px;top:111px;" width="28" height="26" viewBox="0 0 28 26"><path d="M4 1Q12 6 23 1A12 12 0 1 1 4 1Z" fill="#5aae8a"/><rect x="16" y="18" width="10" height="10" fill="#333"/><g fill="#d0d0d0"><rect x="17" y="19" width="2.6" height="2.6"/><rect x="22.4" y="19" width="2.6" height="2.6"/><rect x="19.7" y="21.7" width="2.6" height="2.6"/><rect x="17" y="24.4" width="2.6" height="2.6"/><rect x="22.4" y="24.4" width="2.6" height="2.6"/></g></svg>
<svg style="left:1039px;top:111px;" width="28" height="26" viewBox="0 0 28 26"><path d="M12 0L23 5L12 10L1 5Z" fill="#5aae8a"/><path d="M0.5 7L11 12V26L0.5 21Z" fill="#5aae8a"/><path d="M13 12L23.5 7V21L13 26Z" fill="#5aae8a"/><rect x="17" y="18" width="10" height="10" fill="#333"/><g fill="#d0d0d0"><rect x="18" y="19" width="2.6" height="2.6"/><rect x="23.4" y="19" width="2.6" height="2.6"/><rect x="20.7" y="21.7" width="2.6" height="2.6"/><rect x="18" y="24.4" width="2.6" height="2.6"/><rect x="23.4" y="24.4" width="2.6" height="2.6"/></g></svg>
<svg style="left:1075px;top:111px;" width="28" height="26" viewBox="0 0 28 26"><path d="M3 22C0 15 6 13 12 11C17 9 21 7 18 1.5" stroke="#5aae8a" stroke-width="5" fill="none" stroke-linecap="round"/><path d="M3.5 21C1.5 15.5 7 13.5 12 12C16.5 10.5 20 7.5 17.5 2.5" stroke="#444" stroke-width="1" fill="none"/><rect x="16" y="18" width="10" height="10" fill="#333"/><g fill="#d0d0d0"><rect x="17" y="19" width="2.6" height="2.6"/><rect x="22.4" y="19" width="2.6" height="2.6"/><rect x="19.7" y="21.7" width="2.6" height="2.6"/><rect x="17" y="24.4" width="2.6" height="2.6"/><rect x="22.4" y="24.4" width="2.6" height="2.6"/></g></svg>
<svg style="left:1109px;top:111px;" width="26" height="26" viewBox="0 0 26 26"><rect x="0" y="0" width="25" height="4" fill="#c8c8c8"/><g fill="#333"><rect x="1.5" y="1" width="2" height="2"/><rect x="4.5" y="1" width="2" height="2"/><rect x="7.5" y="1" width="2" height="2"/></g><rect x="0" y="5" width="25" height="20" fill="#5aae8a"/><rect x="5" y="8" width="15" height="15" fill="#333"/><g fill="#d0d0d0"><rect x="6" y="9" width="4" height="4"/><rect x="15" y="9" width="4" height="4"/><rect x="10.5" y="13.5" width="4" height="4"/><rect x="6" y="18" width="4" height="4"/><rect x="15" y="18" width="4" height="4"/></g></svg>
<svg style="left:1142px;top:111px;" width="29" height="26" viewBox="0 0 29 26"><path d="M14 13L2 20M14 13L26 20M9 9L2 5M19 9L26 5" stroke="#5aae8a" stroke-width="2.4" fill="none"/><path d="M0 17L0 21L5 21ZM28 17L28 21L23 21ZM0 2L0 7L5 2ZM28 2L28 7L23 2Z" fill="#5aae8a"/><rect x="9" y="0" width="10" height="10" fill="#333"/><g fill="#d0d0d0"><rect x="10" y="1" width="2.6" height="2.6"/><rect x="15.4" y="1" width="2.6" height="2.6"/><rect x="12.7" y="3.7" width="2.6" height="2.6"/><rect x="10" y="6.4" width="2.6" height="2.6"/><rect x="15.4" y="6.4" width="2.6" height="2.6"/></g></svg>
<div class="a" style="left:0px;top:147px;width:1260px;height:5px;background:#3a3a3a;"></div>
<svg style="left:0px;top:154px;" width="30" height="6" viewBox="0 0 30 6"><rect x="1" y="0.5" width="1" height="1" fill="#888"/><rect x="1" y="3.5" width="1" height="1" fill="#888"/><rect x="4" y="0.5" width="1" height="1" fill="#888"/><rect x="4" y="3.5" width="1" height="1" fill="#888"/><rect x="7" y="0.5" width="1" height="1" fill="#888"/><rect x="7" y="3.5" width="1" height="1" fill="#888"/><rect x="10" y="0.5" width="1" height="1" fill="#888"/><rect x="10" y="3.5" width="1" height="1" fill="#888"/><rect x="13" y="0.5" width="1" height="1" fill="#888"/><rect x="13" y="3.5" width="1" height="1" fill="#888"/><rect x="16" y="0.5" width="1" height="1" fill="#888"/><rect x="16" y="3.5" width="1" height="1" fill="#888"/><rect x="19" y="0.5" width="1" height="1" fill="#888"/><rect x="19" y="3.5" width="1" height="1" fill="#888"/><rect x="22" y="0.5" width="1" height="1" fill="#888"/><rect x="22" y="3.5" width="1" height="1" fill="#888"/><rect x="25" y="0.5" width="1" height="1" fill="#888"/><rect x="25" y="3.5" width="1" height="1" fill="#888"/></svg>
<div class="a" style="left:0px;top:164px;width:29px;height:36px;background:#5285a6;border-radius:0 3px 3px 0"></div>
<svg style="left:4px;top:168px;" width="19" height="27" viewBox="0 0 19 27"><path d="M2 1V21L7 17L11 26L15 24L11 15.5H18Z" fill="#c8c8c8" stroke="#333" stroke-width="1"/></svg>
<svg style="left:0px;top:204px;" width="27" height="30" viewBox="0 0 27 30"><ellipse cx="9" cy="11.5" rx="12" ry="6" transform="rotate(-40 9 11.5)" fill="none" stroke="#4db8c8" stroke-width="2.3" stroke-dasharray="3.6 2.6"/><path d="M11 8V27L14.5 23.5L17.5 29.5L20.5 28L17.5 22H23.5Z" fill="#c8c8c8" stroke="#3a3a3a" stroke-width="0.8"/></svg>
<svg style="left:0px;top:241px;" width="27" height="30" viewBox="0 0 27 30"><ellipse cx="8" cy="19.5" rx="12" ry="6" transform="rotate(38 8 19.5)" fill="none" stroke="#4db8c8" stroke-width="2.3" stroke-dasharray="3.6 2.6"/><path d="M23 1.5L25.5 4L16 13.5L13.5 11Z" fill="#c8c8c8" stroke="#c8c8c8" stroke-width="1" stroke-linejoin="round"/><path d="M13 11L16 14C15 17 10 19.5 4 18.5C8 17 10 14 13 11Z" fill="#c8c8c8"/></svg>
<svg style="left:0px;top:279px;" width="26" height="29" viewBox="0 0 26 29"><rect x="5" y="8" width="13" height="13" fill="#c8c8c8"/><path d="M11.5 1L15 5H8ZM11.5 28L15 24H8ZM0 10.5V18.5L3 14.5ZM23 10.5V18.5L26 14.5Z" fill="#4db8c8"/></svg>
<svg style="left:0px;top:315px;" width="27" height="30" viewBox="0 0 27 30"><path d="M9.5 27.5A12 12 0 1 1 23 15" fill="none" stroke="#4db8c8" stroke-width="1.8"/><path d="M19.5 14.5H26.5L23 19Z" fill="#4db8c8"/><path d="M10 7L18 15L10 23L2 15Z" fill="#c8c8c8"/></svg>
<svg style="left:0px;top:353px;" width="26" height="27" viewBox="0 0 26 27"><path d="M1 1.5H23.5V24.5H10" fill="none" stroke="#4db8c8" stroke-width="1.3" stroke-dasharray="2.6 2"/><path d="M8 11.5H13.5V17" fill="none" stroke="#4db8c8" stroke-width="1.5"/><rect x="0" y="14" width="10" height="11" fill="#c8c8c8"/></svg>
<div class="a" style="left:0px;top:464px;width:29px;height:2px;background:#707070;"></div>
<svg style="left:0px;top:475px;" width="26" height="30" viewBox="0 0 26 30"><rect x="0" y="0.5" width="25" height="28" fill="#c8c8c8" stroke="#c8c8c8"/><rect x="-1" y="2.5" width="24" height="24" fill="#c8c8c8" stroke="#444" stroke-width="0"/><path d="M11 6L15 9.5L11 13L7 9.5ZM5 11L9 14.5L5 18L1 14.5ZM17 11L21 14.5L17 18L13 14.5ZM11 16L15 19.5L11 23L7 19.5Z" fill="#444"/><rect x="-1" y="1" width="25" height="27" fill="none" stroke="#444" stroke-width="1.5"/></svg>
<svg style="left:0px;top:511px;" width="26" height="30" viewBox="0 0 26 30"><rect x="-1" y="0.5" width="10.5" height="12" fill="none" stroke="#c8c8c8" stroke-width="1"/><rect x="12" y="0" width="13" height="13" fill="#c8c8c8"/><rect x="-1" y="15.5" width="10.5" height="12.5" fill="none" stroke="#c8c8c8" stroke-width="1"/><rect x="12.5" y="15.5" width="12" height="12.5" fill="none" stroke="#c8c8c8" stroke-width="1"/><path d="M1 6.5H8M4.5 3V10M1 21.5H8M4.5 18V25M15 21.5H22M18.5 18V25" stroke="#c8c8c8" stroke-width="1"/><path d="M18.5 4L22.5 6.5L18.5 9L14.5 6.5Z" fill="#444"/></svg>
<svg style="left:0px;top:549px;" width="26" height="29" viewBox="0 0 26 29"><rect x="-1" y="0.5" width="10.5" height="27" fill="none" stroke="#c8c8c8" stroke-width="1"/><rect x="12" y="0" width="13" height="28" fill="#c8c8c8"/><path d="M1 14H8M4.5 10.5V17.5" stroke="#c8c8c8" stroke-width="1"/><path d="M18.5 11.5L22.5 14L18.5 16.5L14.5 14Z" fill="#444"/></svg>
<svg style="left:0px;top:586px;" width="26" height="29" viewBox="0 0 26 29"><rect x="-1" y="0.5" width="25" height="28" fill="none" stroke="#c8c8c8" stroke-width="1"/><rect x="2.5" y="5" width="3" height="3" fill="#c8c8c8"/><path d="M6 6.5H13M4 8V25M4 11H8M4 17H8M4 23H8M12 11H18M12 17H16M12 23H18" stroke="#c8c8c8" stroke-width="1"/><rect x="8" y="9.5" width="3" height="3" fill="#c8c8c8"/><rect x="8" y="15.5" width="3" height="3" fill="#c8c8c8"/><rect x="8" y="21.5" width="3" height="3" fill="#c8c8c8"/></svg>
<svg style="left:0px;top:737px;" width="28" height="30" viewBox="0 0 28 30"><defs><linearGradient id="mg1" x1="0" y1="0" x2="0" y2="1"><stop offset="0" stop-color="#a8dcdc"/><stop offset="1" stop-color="#4aaeb0"/></linearGradient><linearGradient id="mg2" x1="0" y1="0" x2="1" y2="1"><stop offset="0" stop-color="#1fb0b4"/><stop offset="1" stop-color="#147f86"/></linearGradient><linearGradient id="mg3" x1="0" y1="0" x2="1" y2="0"><stop offset="0" stop-color="#137a82"/><stop offset="1" stop-color="#22c0c0"/></linearGradient></defs><path d="M0 10L3 15V30H0Z" fill="#1a98a0"/><path d="M-2 0.5H4L14 24H8Z" fill="url(#mg1)"/><path d="M11.5 24L16.5 1H27.5L19.5 17.5L14 24Z" fill="url(#mg2)"/><path d="M18.6 30V16.5L27 0.5V30Z" fill="url(#mg3)"/></svg>
<div class="a" style="left:35px;top:152px;width:950px;height:622px;background:#444;"></div>
<div class="a" style="left:38px;top:155px;width:946px;height:616px;background:#444;border:1px solid #8c8c8c"></div>
<div class="a" style="left:39px;top:199px;width:944px;height:571px;background:#5d5d5d;overflow:hidden"><svg width="944" height="571" style="left:0;top:0"><path d="M472.0 163.0L124.2 285.5 M472.0 163.0L819.5 285.5 M483.0 166.9L134.0 292.4 M461.0 166.9L809.7 292.4 M494.2 170.8L144.1 299.5 M449.8 170.8L799.6 299.5 M505.7 174.9L154.5 306.8 M438.3 174.9L789.2 306.8 M517.4 179.0L165.2 314.3 M426.6 179.0L778.5 314.3 M529.4 183.2L176.2 322.0 M414.6 183.2L767.5 322.0 M541.6 187.5L187.6 330.0 M402.4 187.5L756.2 329.9 M554.1 191.9L199.3 338.2 M389.9 191.9L744.5 338.1 M566.9 196.5L211.4 346.6 M377.1 196.4L732.5 346.6 M580.0 201.1L223.8 355.4 M364.0 201.0L720.1 355.3 M593.4 205.8L236.6 364.4 M350.6 205.8L707.2 364.3 M607.1 210.6L249.9 373.7 M336.9 210.6L694.0 373.6 M635.4 220.6L277.7 393.2 M308.5 220.6L666.2 393.2 M650.1 225.8L292.4 403.5 M293.8 225.8L651.5 403.4 M665.2 231.1L307.5 414.1 M278.7 231.1L636.4 414.1 M680.6 236.6L323.2 425.1 M263.2 236.5L620.7 425.1 M696.5 242.1L339.5 436.5 M247.4 242.1L604.5 436.5 M712.7 247.9L356.3 448.3 M231.1 247.8L587.7 448.3 M729.4 253.7L373.8 460.6 M214.5 253.7L570.2 460.6 M746.4 259.7L391.9 473.3 M197.4 259.7L552.1 473.3 M764.0 265.9L410.8 486.6 M179.8 265.9L533.2 486.5 M782.0 272.3L430.4 500.3 M161.8 272.3L513.6 500.3 M800.5 278.8L450.8 514.6 M143.2 278.8L493.2 514.6 M819.5 285.5L472.0 529.5 M124.2 285.5L472.0 529.5" stroke="#474747" stroke-width="1" fill="none" shape-rendering="crispEdges"/><path d="M621.1 215.6L263.6 383.3 M322.9 215.5L680.3 383.2" stroke="#424242" stroke-width="2" fill="none" shape-rendering="crispEdges"/></svg></div>
<div class="a" style="left:33px;top:152px;width:2px;height:622px;background:#3a3a3a;"></div>
<div class="t" style="left:47px;top:159px;color:#d4d4d4;font-size:12px;">视图</div>
<div class="t" style="left:86px;top:159px;color:#d4d4d4;font-size:12px;">着色</div>
<div class="t" style="left:125px;top:159px;color:#d4d4d4;font-size:12px;">照明</div>
<div class="t" style="left:164px;top:159px;color:#d4d4d4;font-size:12px;">显示</div>
<div class="t" style="left:203px;top:159px;color:#d4d4d4;font-size:12px;">渲染器</div>
<div class="t" style="left:254px;top:159px;color:#d4d4d4;font-size:12px;">面板</div>
<svg style="left:40px;top:180px;" width="5" height="16" viewBox="0 0 5 16"><rect x="2" y="0" width="1" height="16" fill="#8a8a8a"/><rect x="0.5" y="3.5" width="4" height="9.0" rx="1" fill="#8a8a8a"/></svg>
<svg style="left:51px;top:179px;" width="16" height="19" viewBox="0 0 16 19"><rect x="1" y="5" width="9" height="7" fill="#c8c8c8"/><path d="M10 8.5L15 4.5V13Z" fill="#c8c8c8"/></svg>
<svg style="left:70px;top:179px;" width="19" height="19" viewBox="0 0 19 19"><rect x="5" y="5" width="8" height="7" fill="#9a9a9a"/><path d="M13 8.5L17 5V12Z" fill="#9a9a9a"/><rect x="4.5" y="10" width="6.5" height="5.5" rx="0.8" fill="#4db8c8"/><path d="M5.8 10V8.3A2 2 0 0 1 9.7 8.3V10" stroke="#4db8c8" stroke-width="1.3" fill="none"/><circle cx="7.75" cy="12.5" r="0.8" fill="#444"/><path d="M6 1.5H1.5V16.5H6M13 1.5H17.5V16.5H13" stroke="#000" stroke-width="3.6" fill="none"/><path d="M6 1.5H1.5V16.5H6M13 1.5H17.5V16.5H13" stroke="#00ff00" stroke-width="1.9" fill="none"/></svg>
<svg style="left:92px;top:179px;" width="15" height="19" viewBox="0 0 15 19"><rect x="3" y="5" width="8" height="7" fill="#a0a0a0"/><path d="M11 8.5L15 4.5V12.5Z" fill="#a0a0a0"/><circle cx="4.5" cy="13" r="2.2" fill="none" stroke="#4db8c8" stroke-width="1.8"/><rect x="3.6" y="8.8" width="1.8" height="2" fill="#4db8c8" transform="rotate(0 4.5 13)"/><rect x="3.6" y="8.8" width="1.8" height="2" fill="#4db8c8" transform="rotate(45 4.5 13)"/><rect x="3.6" y="8.8" width="1.8" height="2" fill="#4db8c8" transform="rotate(90 4.5 13)"/><rect x="3.6" y="8.8" width="1.8" height="2" fill="#4db8c8" transform="rotate(135 4.5 13)"/><rect x="3.6" y="8.8" width="1.8" height="2" fill="#4db8c8" transform="rotate(180 4.5 13)"/><rect x="3.6" y="8.8" width="1.8" height="2" fill="#4db8c8" transform="rotate(225 4.5 13)"/><rect x="3.6" y="8.8" width="1.8" height="2" fill="#4db8c8" transform="rotate(270 4.5 13)"/><rect x="3.6" y="8.8" width="1.8" height="2" fill="#4db8c8" transform="rotate(315 4.5 13)"/></svg>
<svg style="left:115px;top:179px;" width="8" height="19" viewBox="0 0 8 19"><path d="M0.5 3H7.5V14L4 11L0.5 14Z" fill="#c8c8c8"/></svg>
<svg style="left:131px;top:179px;" width="16" height="19" viewBox="0 0 16 19"><path d="M1 16L4 12H15L12 16Z" fill="none" stroke="#c8c8c8" stroke-width="1.2"/><path d="M5 14L6 5L12 1L11 12Z" fill="#4db8c8"/></svg>
<svg style="left:152px;top:179px;" width="15" height="19" viewBox="0 0 15 19"><path d="M6 2V11H0.5M6 2L4 4.5M6 2L8 4.5M0.5 11L3 9M0.5 11L3 13" stroke="#c8c8c8" stroke-width="1.2" fill="none"/><circle cx="10.5" cy="10" r="3" fill="none" stroke="#4db8c8" stroke-width="1.6"/><path d="M8 12.5L5.5 15.5" stroke="#4db8c8" stroke-width="1.8"/></svg>
<svg style="left:172px;top:179px;" width="14" height="19" viewBox="0 0 14 19"><path d="M3 12L12 3L14 5L5 14Z" fill="#c8c8c8"/><circle cx="2" cy="15" r="1.5" fill="#4db8c8"/><path d="M8 15A2.5 2.5 0 0 0 13 15" stroke="#c8c8c8" stroke-width="1" fill="none"/></svg>
<svg style="left:191px;top:180px;" width="5" height="16" viewBox="0 0 5 16"><rect x="2" y="0" width="1" height="16" fill="#8a8a8a"/><rect x="0.5" y="3.5" width="4" height="9.0" rx="1" fill="#8a8a8a"/></svg>
<svg style="left:204px;top:179px;" width="12" height="19" viewBox="0 0 12 19"><rect x="0.5" y="4.0" width="3" height="3" fill="none" stroke="#c8c8c8" stroke-width="1"/><rect x="0.5" y="7.7" width="3" height="3" fill="none" stroke="#c8c8c8" stroke-width="1"/><rect x="0.5" y="11.4" width="3" height="3" fill="none" stroke="#c8c8c8" stroke-width="1"/><rect x="4.2" y="4.0" width="3" height="3" fill="none" stroke="#c8c8c8" stroke-width="1"/><rect x="4.2" y="7.7" width="3" height="3" fill="none" stroke="#c8c8c8" stroke-width="1"/><rect x="4.2" y="11.4" width="3" height="3" fill="none" stroke="#c8c8c8" stroke-width="1"/><rect x="7.9" y="4.0" width="3" height="3" fill="none" stroke="#c8c8c8" stroke-width="1"/><rect x="7.9" y="7.7" width="3" height="3" fill="none" stroke="#c8c8c8" stroke-width="1"/><rect x="7.9" y="11.4" width="3" height="3" fill="none" stroke="#c8c8c8" stroke-width="1"/></svg>
<svg style="left:222px;top:179px;" width="15" height="19" viewBox="0 0 15 19"><rect x="0.5" y="3.5" width="14" height="11" fill="none" stroke="#c8c8c8" stroke-width="1.2"/><path d="M1 5.5H14M1 12.5H14" stroke="#c8c8c8" stroke-width="1.2" stroke-dasharray="2 1.2"/></svg>
<svg style="left:243px;top:179px;" width="15" height="19" viewBox="0 0 15 19"><rect x="0.5" y="3.5" width="14" height="11" fill="none" stroke="#c8c8c8" stroke-width="1.2"/><circle cx="7.5" cy="9" r="2.8" fill="#4db8c8"/></svg>
<svg style="left:263px;top:179px;" width="15" height="19" viewBox="0 0 15 19"><rect x="0" y="3" width="15" height="12" fill="#c8c8c8"/><circle cx="7.5" cy="9" r="3.8" fill="#3a3a3a"/></svg>
<svg style="left:283px;top:179px;" width="15" height="19" viewBox="0 0 15 19"><rect x="0.5" y="3.5" width="14" height="11" fill="none" stroke="#c8c8c8" stroke-width="1.2"/><path d="M2 9H13M7.5 4.5V13.5" stroke="#4db8c8" stroke-width="1.2" stroke-dasharray="1.5 1"/></svg>
<svg style="left:303px;top:179px;" width="15" height="19" viewBox="0 0 15 19"><rect x="0.5" y="3.5" width="14" height="11" fill="none" stroke="#c8c8c8" stroke-width="1.2"/><path d="M3 12L5.5 8.5L8 12Z" fill="#4db8c8"/><circle cx="9.5" cy="7.5" r="2" fill="#4db8c8"/></svg>
<svg style="left:323px;top:179px;" width="15" height="19" viewBox="0 0 15 19"><rect x="0.5" y="3.5" width="14" height="11" fill="none" stroke="#c8c8c8" stroke-width="1.2"/><path d="M4 6.5H11V8H8.3V12.5H6.7V8H4Z" fill="#4db8c8"/></svg>
<svg style="left:343px;top:180px;" width="5" height="16" viewBox="0 0 5 16"><rect x="2" y="0" width="1" height="16" fill="#8a8a8a"/><rect x="0.5" y="3.5" width="4" height="9.0" rx="1" fill="#8a8a8a"/></svg>
<svg style="left:354px;top:179px;" width="14" height="19" viewBox="0 0 14 19"><path d="M7 2.5L13 5.5V12.5L7 15.5L1 12.5V5.5Z M1 5.5L7 8.5L13 5.5M7 8.5V15.5" fill="none" stroke="#4db8c8" stroke-width="1.1"/></svg>
<svg style="left:374px;top:179px;" width="14" height="19" viewBox="0 0 14 19"><path d="M7 2.5L13 5.5V12.5L7 15.5L1 12.5V5.5Z" fill="#8a8a8a"/><path d="M1 5.5L7 2.5L13 5.5L7 8.5Z" fill="#b8b8b8"/><path d="M7 8.5V15.5L13 12.5V5.5Z" fill="#6e6e6e"/></svg>
<svg style="left:394px;top:179px;" width="14" height="19" viewBox="0 0 14 19"><path d="M6 3A6 6 0 0 0 6 15Z" fill="#c8c8c8"/><rect x="7" y="3" width="2" height="2" fill="#c8c8c8"/><rect x="7" y="7" width="2" height="2" fill="#c8c8c8"/><rect x="7" y="11" width="2" height="2" fill="#c8c8c8"/><rect x="9" y="5" width="2" height="2" fill="#c8c8c8"/><rect x="9" y="9" width="2" height="2" fill="#c8c8c8"/><rect x="9" y="13" width="2" height="2" fill="#c8c8c8"/><rect x="11" y="3" width="2" height="2" fill="#c8c8c8"/><rect x="11" y="7" width="2" height="2" fill="#c8c8c8"/><rect x="11" y="11" width="2" height="2" fill="#c8c8c8"/></svg>
<svg style="left:414px;top:179px;" width="14" height="19" viewBox="0 0 14 19"><path d="M7 2.5L13 5.5V12.5L7 15.5L1 12.5V5.5Z" fill="#707070" stroke="#4db8c8" stroke-width="1.2"/><path d="M1 5.5L7 8.5L13 5.5M7 8.5V15.5" fill="none" stroke="#4db8c8" stroke-width="1.1"/><path d="M4 6L7 4.5L10 6L7 7.5Z" fill="#d0d0d0"/><circle cx="4" cy="10.5" r="0.8" fill="#d0d0d0"/><circle cx="10" cy="10.5" r="0.8" fill="#d0d0d0"/></svg>
<svg style="left:435px;top:179px;" width="13" height="19" viewBox="0 0 13 19"><defs><clipPath id="cc"><circle cx="6.5" cy="9" r="6"/></clipPath></defs><g clip-path="url(#cc)"><rect x="0.5" y="3.0" width="2.4" height="2.4" fill="#c8c8c8"/><rect x="0.5" y="5.4" width="2.4" height="2.4" fill="#333"/><rect x="0.5" y="7.8" width="2.4" height="2.4" fill="#c8c8c8"/><rect x="0.5" y="10.2" width="2.4" height="2.4" fill="#333"/><rect x="0.5" y="12.6" width="2.4" height="2.4" fill="#c8c8c8"/><rect x="2.9" y="3.0" width="2.4" height="2.4" fill="#333"/><rect x="2.9" y="5.4" width="2.4" height="2.4" fill="#c8c8c8"/><rect x="2.9" y="7.8" width="2.4" height="2.4" fill="#333"/><rect x="2.9" y="10.2" width="2.4" height="2.4" fill="#c8c8c8"/><rect x="2.9" y="12.6" width="2.4" height="2.4" fill="#333"/><rect x="5.3" y="3.0" width="2.4" height="2.4" fill="#c8c8c8"/><rect x="5.3" y="5.4" width="2.4" height="2.4" fill="#333"/><rect x="5.3" y="7.8" width="2.4" height="2.4" fill="#c8c8c8"/><rect x="5.3" y="10.2" width="2.4" height="2.4" fill="#333"/><rect x="5.3" y="12.6" width="2.4" height="2.4" fill="#c8c8c8"/><rect x="7.7" y="3.0" width="2.4" height="2.4" fill="#333"/><rect x="7.7" y="5.4" width="2.4" height="2.4" fill="#c8c8c8"/><rect x="7.7" y="7.8" width="2.4" height="2.4" fill="#333"/><rect x="7.7" y="10.2" width="2.4" height="2.4" fill="#c8c8c8"/><rect x="7.7" y="12.6" width="2.4" height="2.4" fill="#333"/><rect x="10.1" y="3.0" width="2.4" height="2.4" fill="#c8c8c8"/><rect x="10.1" y="5.4" width="2.4" height="2.4" fill="#333"/><rect x="10.1" y="7.8" width="2.4" height="2.4" fill="#c8c8c8"/><rect x="10.1" y="10.2" width="2.4" height="2.4" fill="#333"/><rect x="10.1" y="12.6" width="2.4" height="2.4" fill="#c8c8c8"/></g></svg>
<svg style="left:453px;top:179px;" width="14" height="19" viewBox="0 0 14 19"><circle cx="7" cy="8" r="3.5" fill="#c8c8c8"/><rect x="5" y="11" width="4" height="3" fill="#c8c8c8"/><path d="M7 1.5V3M1 8H2.5M11.5 8H13M2.5 3.5L3.5 4.5M11.5 3.5L10.5 4.5M6 16H8" stroke="#c8c8c8" stroke-width="1.2"/></svg>
<svg style="left:473px;top:179px;" width="15" height="19" viewBox="0 0 15 19"><circle cx="10" cy="8" r="4.5" fill="#4db8c8"/><path d="M1 12L6 9M3 14L8 11" stroke="#c8c8c8" stroke-width="1" fill="none"/></svg>
<svg style="left:493px;top:180px;" width="5" height="16" viewBox="0 0 5 16"><rect x="2" y="0" width="1" height="16" fill="#8a8a8a"/><rect x="0.5" y="3.5" width="4" height="9.0" rx="1" fill="#8a8a8a"/></svg>
<svg style="left:506px;top:179px;" width="12" height="19" viewBox="0 0 12 19"><path d="M1 8A5 5 0 0 1 11 8Z" fill="#c8c8c8"/><path d="M1 9L6 12L11 9" fill="#c8c8c8"/><path d="M0.5 13L6 16L11.5 13" stroke="#4db8c8" stroke-width="1" fill="none"/><path d="M2 9H10M3 11H9" stroke="#444" stroke-width="0.7" stroke-dasharray="1 1"/></svg>
<svg style="left:525px;top:179px;" width="15" height="19" viewBox="0 0 15 19"><circle cx="10" cy="9" r="4.5" fill="#c8c8c8"/><path d="M5 5A5 5 0 0 0 5 13M3 5.5A5 5 0 0 0 3 12.5M1 6A5 5 0 0 0 1 12" stroke="#c8c8c8" stroke-width="1" fill="none"/></svg>
<svg style="left:546px;top:179px;" width="12" height="19" viewBox="0 0 12 19"><path d="M6 3.5A5.5 5.5 0 0 1 6 14.5" stroke="#4db8c8" stroke-width="1.8" fill="none"/><path d="M6 3.5A5.5 5.5 0 0 0 6 14.5" stroke="#c8c8c8" stroke-width="1.8" fill="none" stroke-dasharray="1.5 1.2"/></svg>
<svg style="left:565px;top:179px;" width="13" height="19" viewBox="0 0 13 19"><rect x="0.5" y="7" width="8" height="8" fill="#4db8c8"/><path d="M5 3H12V10H9" fill="none" stroke="#c8c8c8" stroke-width="1" stroke-dasharray="1 1"/></svg>
<svg style="left:584px;top:180px;" width="5" height="16" viewBox="0 0 5 16"><rect x="2" y="0" width="1" height="16" fill="#8a8a8a"/><rect x="0.5" y="3.5" width="4" height="9.0" rx="1" fill="#8a8a8a"/></svg>
<svg style="left:596px;top:179px;" width="14" height="19" viewBox="0 0 14 19"><rect x="0.5" y="3.5" width="8" height="8" fill="none" stroke="#4db8c8" stroke-width="1" stroke-dasharray="1.5 1"/><path d="M6 7V17L8.5 14.5L10 17.5L11.5 17L10 14H13Z" fill="#c8c8c8"/></svg>
<svg style="left:616px;top:180px;" width="5" height="16" viewBox="0 0 5 16"><rect x="2" y="0" width="1" height="16" fill="#8a8a8a"/><rect x="0.5" y="3.5" width="4" height="9.0" rx="1" fill="#8a8a8a"/></svg>
<svg style="left:627px;top:179px;" width="13" height="19" viewBox="0 0 13 19"><rect x="0.5" y="8" width="7" height="7" fill="#c8c8c8"/><rect x="4.5" y="4" width="8" height="8" fill="none" stroke="#c8c8c8" stroke-width="1.3"/><rect x="1.5" y="9" width="5" height="5" fill="#444"/></svg>
<svg style="left:647px;top:179px;" width="14" height="19" viewBox="0 0 14 19"><rect x="0.5" y="8" width="7" height="7" fill="#4db8c8"/><rect x="5" y="3.5" width="8" height="8" fill="none" stroke="#c8c8c8" stroke-width="1.3"/><rect x="7" y="6" width="4" height="3" fill="#c8c8c8"/></svg>
<svg style="left:667px;top:179px;" width="14" height="19" viewBox="0 0 14 19"><rect x="0.5" y="3.5" width="13" height="12" fill="none" stroke="#c8c8c8" stroke-width="1.2"/><path d="M4 7L10 12" stroke="#4db8c8" stroke-width="2.2"/></svg>
<svg style="left:686px;top:180px;" width="5" height="16" viewBox="0 0 5 16"><rect x="2" y="0" width="1" height="16" fill="#8a8a8a"/><rect x="0.5" y="3.5" width="4" height="9.0" rx="1" fill="#8a8a8a"/></svg>
<svg style="left:699px;top:179px;" width="14" height="19" viewBox="0 0 14 19"><circle cx="7" cy="9" r="6" fill="#c8c8c8"/><path d="M7 3L5 8L9 9M13 9L8 8L6 12M4 14L7 10L3 7" fill="none" stroke="#444" stroke-width="1.3"/></svg>
<div class="a" style="left:719px;top:180px;width:37px;height:14px;background:#2b2b2b;border-radius:2px"></div>
<div class="t" style="left:722px;top:180px;color:#d0d0d0;font-size:12px;">0.00</div>
<svg style="left:763px;top:179px;" width="12" height="19" viewBox="0 0 12 19"><path d="M6 3A6 6 0 0 0 6 15Z" fill="#c8c8c8"/><path d="M7 4H11V14H7Z" fill="#c8c8c8"/><path d="M8 5H10V13H8Z" fill="#444"/></svg>
<div class="a" style="left:780px;top:180px;width:38px;height:14px;background:#2b2b2b;border-radius:2px"></div>
<div class="t" style="left:783px;top:180px;color:#d0d0d0;font-size:12px;">1.00</div>
<div class="a" style="left:821px;top:179px;width:19px;height:17px;background:#5285a6;border-radius:2px"></div>
<svg style="left:822px;top:180px;" width="17" height="15" viewBox="0 0 17 15"><circle cx="8.5" cy="7.5" r="6.2" fill="none" stroke="#2b6c80" stroke-width="1.3"/><circle cx="8.5" cy="7.5" r="5" fill="#4db8c8"/><text x="8.5" y="10" text-anchor="middle" font-size="6" font-weight="bold" fill="#2b5060" font-family="Liberation Sans">ON</text></svg>
<div class="a" style="left:843px;top:179px;width:130px;height:17px;background:#5a5a5a;"></div>
<div class="a" style="left:974px;top:179px;width:10px;height:17px;background:#5a5a5a;"></div>
<div class="t" style="left:846px;top:182px;color:#d0d0d0;font-size:12.5px;">sRGB gamma</div>
<svg style="left:975px;top:184px;" width="8" height="6" viewBox="0 0 8 6"><path d="M0 0H8L8 6Z" fill="#c8c8c8"/></svg>
<div class="a" style="left:39px;top:196px;width:944px;height:3px;background:#3c3c3c;"></div>
<svg style="left:44px;top:716px;" width="40" height="40" viewBox="0 0 40 40"><path d="M20.5 16V28" stroke="#00ff00" stroke-width="1" shape-rendering="crispEdges"/><path d="M20.5 28.3L12 32.5" stroke="#0000ff" stroke-width="1.1"/><path d="M21 28.8L28.5 32" stroke="#ff0000" stroke-width="1.1"/><path d="M17 8.5H23M18 9.5L20 12M22 9.5L20 12M20 12V14M17.5 14H20" stroke="#00ff00" stroke-width="1.3" fill="none"/><path d="M7 27.5H12L7.5 31.5H12.5" stroke="#0000ff" stroke-width="1.4" fill="none"/><path d="M28 27.5H34M28 32.5H34M29 28L33 32M33 28L29 32" stroke="#ff0000" stroke-width="1.4" fill="none"/></svg>
<div class="t" style="left:488px;top:751px;color:#fff;font-size:11px;font-family:&quot;Liberation Mono&quot;,monospace;font-weight:bold;line-height:12px;letter-spacing:0.3px">persp</div>
<svg style="left:895px;top:218px;" width="72" height="76" viewBox="0 0 72 76"><defs><radialGradient id="shd" cx="0.5" cy="0.5" r="0.5"><stop offset="0" stop-color="#000" stop-opacity="0.4"/><stop offset="1" stop-color="#000" stop-opacity="0"/></radialGradient><linearGradient id="cf" x1="0" y1="0" x2="0" y2="1"><stop offset="0" stop-color="#a2a2a2"/><stop offset="1" stop-color="#929292"/></linearGradient></defs><ellipse cx="38" cy="56" rx="36" ry="20" fill="url(#shd)"/><path d="M2 13L35 1L69 13L35.5 26Z" fill="#a6a6a6"/><path d="M2 13L35.5 26V71L4 52Z" fill="url(#cf)"/><path d="M35.5 26L69 13L66.5 50.5L35.5 71Z" fill="#979797"/><path d="M35.5 26V71" stroke="#505050" stroke-width="0.8"/><path d="M5 13L35.5 24.5L66 13" stroke="#8a8a8a" stroke-width="0.8" fill="none" stroke-dasharray="4 3"/><path d="M27 11L41 6M30 14L44 9M35 8L38 12" stroke="#8890a0" stroke-width="0.8"/><text x="18" y="46" text-anchor="middle" font-size="17" fill="#7a8090" transform="skewY(20) translate(0,-6)">前</text><text x="52" y="44" text-anchor="middle" font-size="17" fill="#7a8090" transform="skewY(-20) translate(0,19)">右</text></svg>
<div class="a" style="left:985px;top:152px;width:4px;height:622px;background:#3a3a3a;"></div>
<div class="t" style="left:1001px;top:159px;color:#d4d4d4;font-size:12px;">通道</div>
<div class="t" style="left:1040px;top:159px;color:#d4d4d4;font-size:12px;">编辑</div>
<div class="t" style="left:1079px;top:159px;color:#d4d4d4;font-size:12px;">对象</div>
<div class="t" style="left:1118px;top:159px;color:#d4d4d4;font-size:12px;">显示</div>
<div class="a" style="left:994px;top:180px;width:254px;height:373px;background:#2b2b2b;"></div>
<div class="a" style="left:1249px;top:152px;width:11px;height:622px;background:#3c3c3c;"></div>
<div class="a" style="left:1249px;top:152px;width:11px;height:114px;background:#444;"></div>
<div class="t" style="left:1262px;top:163px;width:100px;color:#e0e0e0;font-size:12.5px;line-height:12px;transform-origin:0 0;transform:rotate(90deg)">通道盒/层编辑器</div>
<div class="a" style="left:1249px;top:266px;width:11px;height:1px;background:#555;"></div>
<div class="t" style="left:1262px;top:275px;width:110px;color:#a0a0a0;font-size:13px;line-height:12px;transform-origin:0 0;transform:rotate(90deg)">Modeling Toolkit</div>
<div class="a" style="left:1249px;top:388px;width:11px;height:1px;background:#555;"></div>
<div class="t" style="left:1262px;top:407px;width:60px;color:#a0a0a0;font-size:11px;line-height:12px;transform-origin:0 0;transform:rotate(90deg)">属性编辑器</div>
<svg style="left:1078px;top:556px;" width="86" height="1" viewBox="0 0 86 1"><rect x="0" y="0" width="1" height="1" fill="#777"/><rect x="3" y="0" width="1" height="1" fill="#777"/><rect x="6" y="0" width="1" height="1" fill="#777"/><rect x="9" y="0" width="1" height="1" fill="#777"/><rect x="12" y="0" width="1" height="1" fill="#777"/><rect x="15" y="0" width="1" height="1" fill="#777"/><rect x="18" y="0" width="1" height="1" fill="#777"/><rect x="21" y="0" width="1" height="1" fill="#777"/><rect x="24" y="0" width="1" height="1" fill="#777"/><rect x="27" y="0" width="1" height="1" fill="#777"/><rect x="30" y="0" width="1" height="1" fill="#777"/><rect x="33" y="0" width="1" height="1" fill="#777"/><rect x="36" y="0" width="1" height="1" fill="#777"/><rect x="39" y="0" width="1" height="1" fill="#777"/><rect x="42" y="0" width="1" height="1" fill="#777"/><rect x="45" y="0" width="1" height="1" fill="#777"/><rect x="48" y="0" width="1" height="1" fill="#777"/><rect x="51" y="0" width="1" height="1" fill="#777"/><rect x="54" y="0" width="1" height="1" fill="#777"/><rect x="57" y="0" width="1" height="1" fill="#777"/><rect x="60" y="0" width="1" height="1" fill="#777"/><rect x="63" y="0" width="1" height="1" fill="#777"/><rect x="66" y="0" width="1" height="1" fill="#777"/><rect x="69" y="0" width="1" height="1" fill="#777"/><rect x="72" y="0" width="1" height="1" fill="#777"/><rect x="75" y="0" width="1" height="1" fill="#777"/><rect x="78" y="0" width="1" height="1" fill="#777"/><rect x="81" y="0" width="1" height="1" fill="#777"/><rect x="84" y="0" width="1" height="1" fill="#777"/></svg>
<div class="a" style="left:994px;top:565px;width:254px;height:20px;background:#3a3a3a;"></div>
<div class="a" style="left:995px;top:567px;width:45px;height:18px;background:#444;border-radius:3px 3px 0 0"></div>
<div class="a" style="left:1043px;top:567px;width:45px;height:18px;background:#383838;border-radius:3px 3px 0 0;border:1px solid #2e2e2e;border-bottom:none"></div>
<div class="t" style="left:1005px;top:569px;color:#e0e0e0;font-size:12px;">显示</div>
<div class="t" style="left:1053px;top:569px;color:#bcbcbc;font-size:12px;">动画</div>
<div class="t" style="left:1004px;top:590px;color:#d4d4d4;font-size:12px;">层</div>
<div class="t" style="left:1031px;top:590px;color:#d4d4d4;font-size:12px;">选项</div>
<div class="t" style="left:1070px;top:590px;color:#d4d4d4;font-size:12px;">帮助</div>
<svg style="left:1151px;top:613px;" width="20" height="15" viewBox="0 0 20 15"><path d="M0.5 8.5L7 4.5L12 8.5L7 13Z" fill="#c8c8c8"/><path d="M11.5 4L15 7.5H13V12H10V7.5H8Z" fill="#4db8c8" stroke="#333" stroke-width="0.6"/></svg>
<svg style="left:1174px;top:613px;" width="20" height="15" viewBox="0 0 20 15"><path d="M0.5 8.5L7 4.5L14 8.5L7 13Z" fill="#c8c8c8"/><path d="M14 13L17.5 9.5H15.5V5H12.5V9.5H10.5Z" fill="#4db8c8" stroke="#333" stroke-width="0.6"/></svg>
<svg style="left:1201px;top:613px;" width="20" height="15" viewBox="0 0 20 15"><path d="M0.5 8.5L7 4.5L14 8.5L7 13Z" fill="#c8c8c8"/><path d="M12 2V9M8.5 5.5H15.5" stroke="#333" stroke-width="3.2"/><path d="M12 2.5V8.5M9 5.5H15" stroke="#4db8c8" stroke-width="2"/></svg>
<svg style="left:1225px;top:613px;" width="20" height="15" viewBox="0 0 20 15"><path d="M0.5 8.5L7 4.5L13 8.5L7 13Z" fill="#c8c8c8"/><circle cx="10" cy="4.8" r="3.2" fill="#4db8c8" stroke="#333" stroke-width="0.6"/></svg>
<div class="a" style="left:997px;top:636px;width:247px;height:118px;background:#2b2b2b;"></div>
<div class="a" style="left:997px;top:754px;width:247px;height:12px;background:#3a3a3a;"></div>
<svg style="left:999px;top:756px;" width="6" height="9" viewBox="0 0 6 9"><path d="M6 0V9L0 4.5Z" fill="#c8c8c8"/></svg>
<div class="a" style="left:1010px;top:755px;width:154px;height:10px;background:#5a5a5a;border-radius:5px"></div>
<svg style="left:1235px;top:756px;" width="6" height="9" viewBox="0 0 6 9"><path d="M0 0V9L6 4.5Z" fill="#c8c8c8"/></svg>
<div class="a" style="left:993px;top:766px;width:256px;height:4px;background:#3a3a3a;"></div>
<div class="a" style="left:993px;top:585px;width:1px;height:185px;background:#3a3a3a;"></div>
<div class="a" style="left:0px;top:774px;width:1260px;height:6px;background:#3c3c3c;"></div>
<div class="a" style="left:2px;top:780px;width:992px;height:28px;background:#2b2b2b;"></div>
<div class="a" style="left:8px;top:780px;width:6px;height:28px;background:#5a5a5a;"></div>
<div class="t" style="left:9px;top:792px;color:#e0e0e0;font-size:12px;">1</div>
<svg style="left:3px;top:780px;" width="991" height="28" viewBox="0 0 991 28"><rect x="36.5" y="17" width="1.5" height="11" fill="#9a9a9a"/><rect x="77.4" y="17" width="1.5" height="11" fill="#9a9a9a"/><rect x="118.4" y="17" width="1.5" height="11" fill="#9a9a9a"/><rect x="159.3" y="17" width="1.5" height="11" fill="#9a9a9a"/><rect x="200.3" y="17" width="1.5" height="11" fill="#9a9a9a"/><rect x="241.2" y="17" width="1.5" height="11" fill="#9a9a9a"/><rect x="282.2" y="17" width="1.5" height="11" fill="#9a9a9a"/><rect x="323.1" y="17" width="1.5" height="11" fill="#9a9a9a"/><rect x="364.1" y="17" width="1.5" height="11" fill="#9a9a9a"/><rect x="405.0" y="17" width="1.5" height="11" fill="#9a9a9a"/><rect x="446.0" y="17" width="1.5" height="11" fill="#9a9a9a"/><rect x="486.9" y="17" width="1.5" height="11" fill="#9a9a9a"/><rect x="527.9" y="17" width="1.5" height="11" fill="#9a9a9a"/><rect x="568.9" y="17" width="1.5" height="11" fill="#9a9a9a"/><rect x="609.8" y="17" width="1.5" height="11" fill="#9a9a9a"/><rect x="650.8" y="17" width="1.5" height="11" fill="#9a9a9a"/><rect x="691.7" y="17" width="1.5" height="11" fill="#9a9a9a"/><rect x="732.6" y="17" width="1.5" height="11" fill="#9a9a9a"/><rect x="773.6" y="17" width="1.5" height="11" fill="#9a9a9a"/><rect x="814.5" y="17" width="1.5" height="11" fill="#9a9a9a"/><rect x="855.5" y="17" width="1.5" height="11" fill="#9a9a9a"/><rect x="896.4" y="17" width="1.5" height="11" fill="#9a9a9a"/><rect x="937.4" y="17" width="1.5" height="11" fill="#9a9a9a"/><rect x="978.3" y="17" width="1.5" height="11" fill="#9a9a9a"/></svg>
<div class="t" style="left:41.0px;top:780px;color:#8c8c8c;font-size:12px">5</div>
<div class="t" style="left:81.9px;top:780px;color:#8c8c8c;font-size:12px">10</div>
<div class="t" style="left:122.9px;top:780px;color:#8c8c8c;font-size:12px">15</div>
<div class="t" style="left:163.8px;top:780px;color:#8c8c8c;font-size:12px">20</div>
<div class="t" style="left:204.8px;top:780px;color:#8c8c8c;font-size:12px">25</div>
<div class="t" style="left:245.8px;top:780px;color:#8c8c8c;font-size:12px">30</div>
<div class="t" style="left:286.7px;top:780px;color:#8c8c8c;font-size:12px">35</div>
<div class="t" style="left:327.6px;top:780px;color:#8c8c8c;font-size:12px">40</div>
<div class="t" style="left:368.6px;top:780px;color:#8c8c8c;font-size:12px">45</div>
<div class="t" style="left:409.5px;top:780px;color:#8c8c8c;font-size:12px">50</div>
<div class="t" style="left:450.5px;top:780px;color:#8c8c8c;font-size:12px">55</div>
<div class="t" style="left:491.4px;top:780px;color:#8c8c8c;font-size:12px">60</div>
<div class="t" style="left:532.4px;top:780px;color:#8c8c8c;font-size:12px">65</div>
<div class="t" style="left:573.4px;top:780px;color:#8c8c8c;font-size:12px">70</div>
<div class="t" style="left:614.3px;top:780px;color:#8c8c8c;font-size:12px">75</div>
<div class="t" style="left:655.2px;top:780px;color:#8c8c8c;font-size:12px">80</div>
<div class="t" style="left:696.2px;top:780px;color:#8c8c8c;font-size:12px">85</div>
<div class="t" style="left:737.1px;top:780px;color:#8c8c8c;font-size:12px">90</div>
<div class="t" style="left:778.1px;top:780px;color:#8c8c8c;font-size:12px">95</div>
<div class="t" style="left:819.0px;top:780px;color:#8c8c8c;font-size:12px">100</div>
<div class="t" style="left:860.0px;top:780px;color:#8c8c8c;font-size:12px">105</div>
<div class="t" style="left:900.9px;top:780px;color:#8c8c8c;font-size:12px">110</div>
<div class="t" style="left:941.9px;top:780px;color:#8c8c8c;font-size:12px">115</div>
<div class="t" style="left:982.8px;top:780px;color:#8c8c8c;font-size:12px">120</div>
<div class="a" style="left:994px;top:780px;width:266px;height:28px;background:#444;"></div>
<div class="a" style="left:1001px;top:786px;width:68px;height:20px;background:#2b2b2b;border-radius:3px"></div>
<div class="t" style="left:1007px;top:790px;color:#d8d8d8;font-size:12px;">1</div>
<svg style="left:1078px;top:785px;" width="182" height="19" viewBox="0 0 182 19"><rect x="0.3" y="3" width="2" height="12" fill="#c8c8c8"/><path d="M10 4L3.5 9L10 14ZM17 4L10.5 9L17 14Z" fill="#c8c8c8"/><rect x="25.4" y="3" width="2" height="12" fill="#c8c8c8"/><path d="M38 3L29 9L38 15Z" fill="#c8c8c8"/><path d="M49.7 0V18" stroke="#ddd" stroke-width="0.8"/><rect x="48" y="2.5" width="3.5" height="13" fill="#e0995a" stroke="#ddd" stroke-width="0.6"/><path d="M61 3L52 9L61 15Z" fill="#c8c8c8"/><path d="M84 1L71 9L84 17Z" fill="#c8c8c8"/><path d="M95 1L108 9L95 17Z" fill="#c8c8c8"/><path d="M118 3L127 9L118 15Z" fill="#c8c8c8"/><path d="M129.7 0V18" stroke="#ddd" stroke-width="0.8"/><rect x="128" y="2.5" width="3.5" height="13" fill="#e0995a" stroke="#ddd" stroke-width="0.6"/><path d="M141 3L150 9L141 15Z" fill="#c8c8c8"/><rect x="151" y="3" width="2" height="12" fill="#c8c8c8"/><path d="M162 4L168.5 9L162 14ZM169 4L175.5 9L169 14Z" fill="#c8c8c8"/><rect x="176" y="3" width="2" height="12" fill="#c8c8c8"/></svg>
<div class="a" style="left:0px;top:808px;width:1260px;height:5px;background:#3c3c3c;"></div>
<div class="a" style="left:3px;top:819px;width:68px;height:16px;background:#2b2b2b;border-radius:3px 3px 0 0"></div>
<div class="t" style="left:9px;top:823px;color:#d8d8d8;font-size:12px;">1</div>
<div class="a" style="left:79px;top:819px;width:68px;height:16px;background:#2b2b2b;border-radius:3px 3px 0 0"></div>
<div class="t" style="left:85px;top:823px;color:#d8d8d8;font-size:12px;">1</div>
<div class="a" style="left:153px;top:818px;width:645px;height:16px;background:#393939;"></div>
<div class="a" style="left:158px;top:821px;width:393px;height:13px;background:#5e5e5e;border-radius:3px 3px 0 0"></div>
<div class="a" style="left:162px;top:823px;width:12px;height:11px;background:#a8a8a8;border-radius:2px 2px 0 0"></div>
<div class="t" style="left:177px;top:823px;color:#d8d8d8;font-size:12px;">1</div>
<div class="t" style="left:510px;top:823px;color:#d8d8d8;font-size:12px;">120</div>
<div class="a" style="left:534px;top:823px;width:12px;height:11px;background:#a8a8a8;border-radius:2px 2px 0 0"></div>
<div class="a" style="left:805px;top:819px;width:68px;height:16px;background:#2b2b2b;border-radius:3px 3px 0 0"></div>
<div class="t" style="left:811px;top:823px;color:#d8d8d8;font-size:12px;">120</div>
<div class="a" style="left:881px;top:819px;width:68px;height:16px;background:#2b2b2b;border-radius:3px 3px 0 0"></div>
<div class="t" style="left:887px;top:823px;color:#d8d8d8;font-size:12px;">200</div>
<svg style="left:955px;top:827px;" width="10" height="5" viewBox="0 0 10 5"><path d="M0.5 0.5H9.5L5 4.5Z" fill="none" stroke="#b0b0b0" stroke-width="1"/></svg>
<div class="a" style="left:971px;top:819px;width:102px;height:16px;background:#4a4a4a;border:1px solid #555;border-radius:3px 3px 0 0"></div>
<div class="t" style="left:977px;top:823px;color:#d0d0d0;font-size:12px;">无动画层</div>
<svg style="left:1083px;top:827px;" width="10" height="5" viewBox="0 0 10 5"><path d="M0.5 0.5H9.5L5 4.5Z" fill="none" stroke="#b0b0b0" stroke-width="1"/></svg>
<div class="a" style="left:1101px;top:819px;width:100px;height:16px;background:#4a4a4a;border:1px solid #555;border-radius:3px 3px 0 0"></div>
<div class="t" style="left:1106px;top:823px;color:#d0d0d0;font-size:12px;">无角色集</div>
<svg style="left:1210px;top:821px;" width="18" height="13" viewBox="0 0 18 13"><path d="M3 5A7 7 0 1 1 3 13" fill="none" stroke="#c8c8c8" stroke-width="1.5"/><path d="M0 3L4 6L1 8" fill="none" stroke="#c8c8c8" stroke-width="1.3"/><path d="M9 5V13" stroke="#e0995a" stroke-width="2"/><path d="M6 10H12" stroke="#c8c8c8" stroke-width="1"/></svg>
<svg style="left:1238px;top:820px;" width="22" height="14" viewBox="0 0 22 14"><circle cx="6" cy="5" r="2.8" fill="none" stroke="#c8c8c8" stroke-width="1.8"/><path d="M6 0.5V1.5M6 8.5V9.5M1.5 5H2.5M9.5 5H10.5M2.8 1.8L3.5 2.5M8.5 7.5L9.2 8.2M2.8 8.2L3.5 7.5M8.5 2.5L9.2 1.8" stroke="#c8c8c8" stroke-width="1.5"/><circle cx="17" cy="4" r="2" fill="#e0995a"/><path d="M15 6L11 9L13 11L12 14M15 6L17 11L20 10M15 8L19 7" stroke="#e0995a" stroke-width="2" fill="none"/></svg>
</body></html>
